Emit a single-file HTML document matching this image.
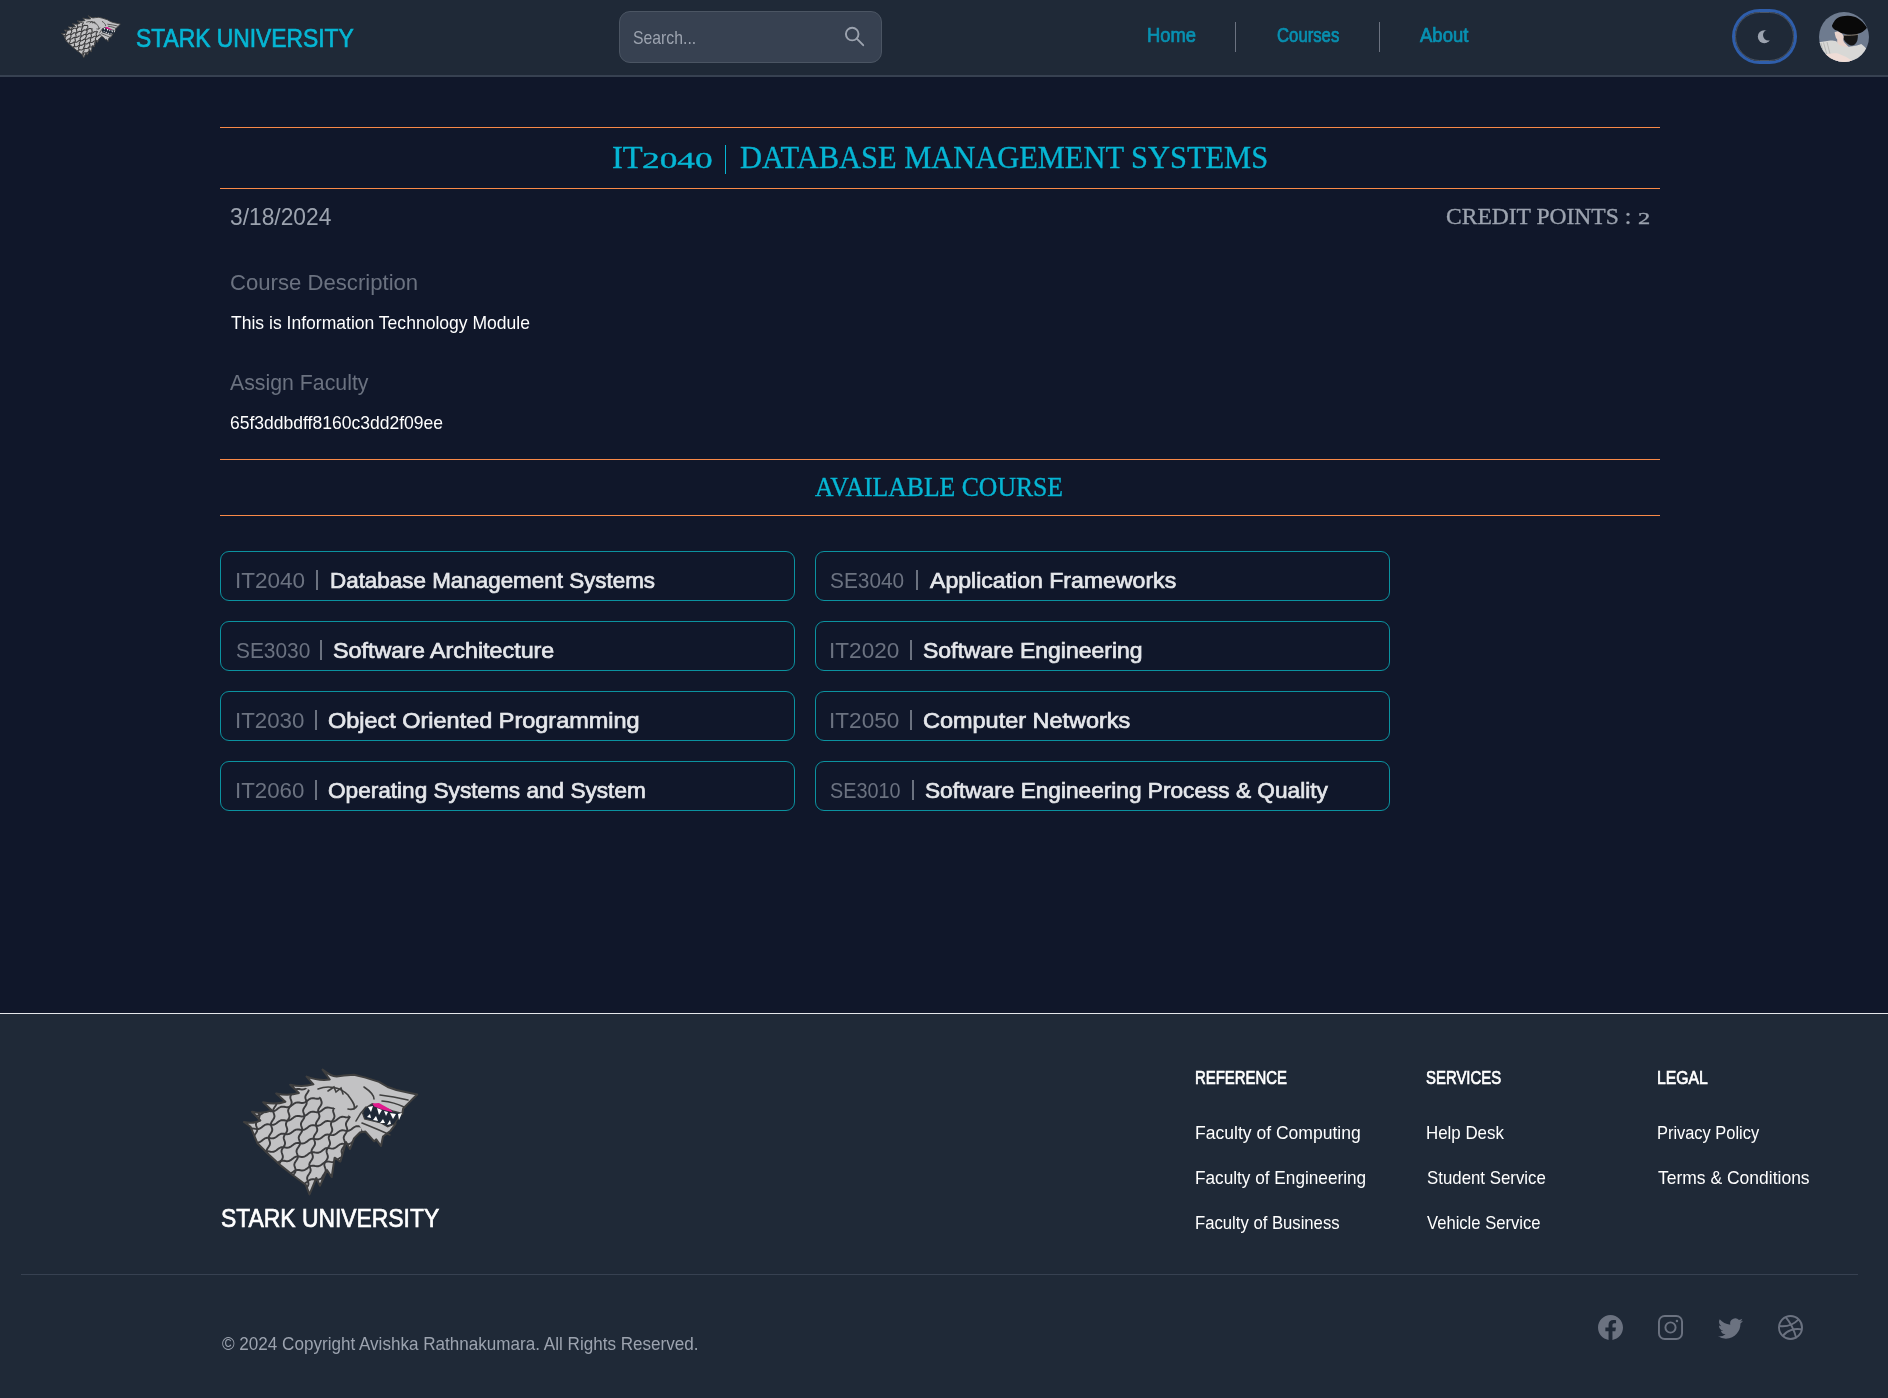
<!DOCTYPE html>
<html><head><meta charset="utf-8">
<style>
html,body{margin:0;padding:0;}
body{width:1888px;height:1398px;overflow:hidden;background:#10172a;position:relative;font-family:"Liberation Sans",sans-serif;}
.t{position:absolute;white-space:nowrap;line-height:1 !important;transform-origin:0 0;}
.abs{position:absolute;}
#nav{position:absolute;left:0;top:0;width:1888px;height:75px;background:#1f2937;border-bottom:2px solid #374151;}
#search{position:absolute;left:619px;top:11px;width:261px;height:50px;background:#374151;border:1px solid #4b5563;border-radius:11px;}
.vd{position:absolute;top:22px;width:1px;height:30px;background:#6b7280;}
#toggle{position:absolute;left:1735px;top:12px;width:57px;height:47px;border:1px solid #4b5563;border-radius:30px;box-shadow:0 0 0 3px #2f5eab;}
.hr{position:absolute;left:220px;width:1440px;height:1px;background:#f98a48;}
.card{position:absolute;width:573px;height:48px;border:1px solid #0b929f;border-radius:9px;}
.pipe{position:absolute;width:1.8px;height:20px;background:#6b7280;}
#footer{position:absolute;left:0;top:1013px;width:1888px;height:385px;background:#1f2937;border-top:1px solid #e5e7eb;}
#fline{position:absolute;left:21px;top:1274px;width:1837px;height:1px;background:#374151;}
</style></head><body>
<div id="nav"></div>
<div id="search"></div>
<svg class="abs" style="left:843px;top:25px" width="24" height="24" viewBox="0 0 24 24"><circle cx="9.2" cy="9.1" r="6.3" fill="none" stroke="#9ca3af" stroke-width="1.9"/><line x1="13.8" y1="13.6" x2="20.2" y2="20.2" stroke="#9ca3af" stroke-width="1.9" stroke-linecap="round"/></svg>
<div class="vd" style="left:1235px"></div>
<div class="vd" style="left:1379px"></div>
<div id="toggle"></div>
<svg class="abs" style="left:1750px;top:25px" width="26" height="24" viewBox="0 0 26 24"><defs><mask id="mm"><rect width="26" height="24" fill="#fff"/><circle cx="18.4" cy="10.05" r="5.42" fill="#000"/></mask></defs><circle cx="14.3" cy="11.7" r="6.5" fill="#9ca3af" mask="url(#mm)"/></svg>
<svg class="abs" style="left:1819px;top:12px" width="50" height="50" viewBox="0 0 50 50">
 <defs><clipPath id="av"><circle cx="25" cy="25" r="25"/></clipPath></defs>
 <g clip-path="url(#av)">
  <rect width="50" height="50" fill="#6e7b8f"/>
  <path d="M15.6 20.3 C17 19.5 18 19.3 19 19.5 C21 20 22 20.8 22.9 21.6 C24 23 24.8 24.5 25 25.9 L24.2 27.6 C24 29 26 32 31 36 L18 36 C18 31 18.3 29 18.2 27.6 C17 26.5 16.5 24.5 16 22.5 Z" fill="#e8d2cb"/>
  <path d="M0 30.2 L11.3 28.5 C14 28.5 16 28.8 17.3 29.3 C18.5 30.5 19 32 19.9 32.8 C23 34 26 34.9 28.5 34.9 C32 34.6 35 34.2 37.9 33.6 C39.5 33 41 32.5 42.2 31.9 C44 33 45.5 34.5 47 36.2 L50 38 L50 50 L0 50 Z" fill="#d8d8d6"/>
  <path d="M2 31 L5 44 M4.5 30.5 L8 43 M8 30 L11 42" stroke="#b4b4b2" stroke-width="0.9"/>
  <path d="M0 43 L7.4 42.2 C12 41.6 16 41.2 19 41.4 C21 42 23 43 25 44 C28 45.5 30.5 47 32.8 48.2 L33 50 L0 50 Z" fill="#efdcd6"/>
  <path d="M13 13.5 C15 9 17 6.5 19 5.7 C22 4.3 26 3.6 29.3 3.8 C33 4 36 4.8 37.9 5.7 C42 8 45.5 11.5 47.8 15.6 L47.8 16 C46 18 44 19.8 41.8 20.8 C40.5 21.4 39 21.8 37.9 22 C35 22.4 32.5 22.6 30.2 22.5 C27.5 22.3 25 21.9 22.9 21.2 C21.5 20.6 20 19.8 19 19 C17.5 18.5 16 18 15.2 17.3 C14 16.4 13.3 15.4 13 14.3 Z" fill="#090909"/>
  <path d="M25 22.9 C29 22.5 34 22.2 38.8 22 C39 24.5 38.8 26.5 38.3 28.5 C37.8 30 37 31 36.2 31.9 C35 32.9 33.5 33.4 31.9 33.6 C30 33 28.5 32 27.2 30.6 C26 29.5 25 28 24.6 26.8 Z" fill="#161616"/>
  <path d="M25 23.3 C30 23.6 35 23.2 39.5 22.3" stroke="#bfae9c" stroke-width="0.6" fill="none"/>
 </g>
</svg>
<div class="hr" style="top:127px"></div>
<div class="hr" style="top:188px"></div>
<div class="hr" style="top:459px"></div>
<div class="hr" style="top:515px"></div>
<div class="card" style="left:220px;top:551px"></div>
<div class="card" style="left:815px;top:551px"></div>
<div class="card" style="left:220px;top:621px"></div>
<div class="card" style="left:815px;top:621px"></div>
<div class="card" style="left:220px;top:691px"></div>
<div class="card" style="left:815px;top:691px"></div>
<div class="card" style="left:220px;top:761px"></div>
<div class="card" style="left:815px;top:761px"></div>
<div class="pipe" style="left:316.4px;top:570px"></div>
<div class="pipe" style="left:916.3px;top:570px"></div>
<div class="pipe" style="left:320.0px;top:640px"></div>
<div class="pipe" style="left:910.0px;top:640px"></div>
<div class="pipe" style="left:315.0px;top:710px"></div>
<div class="pipe" style="left:910.0px;top:710px"></div>
<div class="pipe" style="left:315.0px;top:780px"></div>
<div class="pipe" style="left:911.9px;top:780px"></div>
<div class="abs" style="left:724.6px;top:145px;width:1.8px;height:29px;background:#06b6d4"></div>
<div id="footer"></div>
<div id="fline"></div>
<svg width="0" height="0" style="position:absolute"><defs>
<clipPath id="wsil"><path d="M3.9,57.0 Q13.1,59.2 20.3,55.5 L12.0,46.8 Q22.9,49.1 31.9,45.4 L23.2,37.2 Q35.3,40.0 45.4,36.7 L36.2,28.5 Q48.5,31.2 58.9,28.0 L50.2,19.8 Q62.8,22.6 73.4,19.3 L66.6,11.6 Q79.2,16.1 89.8,14.5 L82.6,4.6 Q90.6,11.1 96.6,11.6 L104.0,10.6 L114.0,9.7 L125.5,12.6 L139.0,16.9 L147.7,22.0 L156.4,25.0 L170.0,28.0 L177.2,29.5 L173.8,32.8 L168.0,38.6 L163.2,43.5 L162.2,49.0 L158.4,50.2 L154.5,54.0 L155.5,59.0 L150.6,65.7 L143.0,71.5 L141.0,81.0 L136.2,74.4 L134.2,76.3 L125.5,66.6 L119.7,67.6 L114.0,73.4 L110.0,84.0 L106.0,77.0 L100.4,96.6 L94.6,92.7 L91.7,112.0 L87.0,105.0 L80.0,120.7 L76.3,113.0 L69.5,129.4 L65.7,119.7 L54.0,111.0 L40.6,100.4 L29.0,89.8 L17.4,78.2 L10.6,61.8 Z"/></clipPath>
<clipPath id="wneck"><polygon points="0.0,0.0 62.0,0.0 64.0,22.0 75.0,28.0 92.0,42.0 106.0,48.0 118.0,58.0 125.0,70.0 130.0,135.0 0.0,135.0"/></clipPath>
<symbol id="wolf" viewBox="0 0 180 135">
<path d="M3.9,57.0 Q13.1,59.2 20.3,55.5 L12.0,46.8 Q22.9,49.1 31.9,45.4 L23.2,37.2 Q35.3,40.0 45.4,36.7 L36.2,28.5 Q48.5,31.2 58.9,28.0 L50.2,19.8 Q62.8,22.6 73.4,19.3 L66.6,11.6 Q79.2,16.1 89.8,14.5 L82.6,4.6 Q90.6,11.1 96.6,11.6 L104.0,10.6 L114.0,9.7 L125.5,12.6 L139.0,16.9 L147.7,22.0 L156.4,25.0 L170.0,28.0 L177.2,29.5 L173.8,32.8 L168.0,38.6 L163.2,43.5 L162.2,49.0 L158.4,50.2 L154.5,54.0 L155.5,59.0 L150.6,65.7 L143.0,71.5 L141.0,81.0 L136.2,74.4 L134.2,76.3 L125.5,66.6 L119.7,67.6 L114.0,73.4 L110.0,84.0 L106.0,77.0 L100.4,96.6 L94.6,92.7 L91.7,112.0 L87.0,105.0 L80.0,120.7 L76.3,113.0 L69.5,129.4 L65.7,119.7 L54.0,111.0 L40.6,100.4 L29.0,89.8 L17.4,78.2 L10.6,61.8 Z" fill="#c2c2c4" stroke="#3f3f3f" style="stroke-width:var(--ow,2)" stroke-linejoin="round"/>
<g clip-path="url(#wsil)"><g clip-path="url(#wneck)" fill="none" stroke="#3c3c3e" style="stroke-width:var(--sw,1.9)" stroke-linejoin="round"><path d="M-32.7,-10.0 L-33.1,-8.5 L-32.9,-7.0 L-32.4,-5.5 L-31.9,-4.0 L-31.7,-2.5 L-32.1,-1.0 L-33.0,0.5 L-34.0,2.0 L-34.9,3.5 L-35.3,5.0 L-35.1,6.5 L-34.6,8.0 L-34.1,9.5 L-33.9,11.0 L-34.3,12.5 L-35.2,14.0 L-36.2,15.5 L-37.1,17.0 L-37.5,18.5 L-37.3,20.0 L-36.8,21.5 L-36.3,23.0 L-36.1,24.5 L-36.5,26.0 L-37.4,27.5 L-38.4,29.0 L-39.3,30.5 L-39.7,32.0 L-39.5,33.5 L-39.0,35.0 L-38.5,36.5 L-38.3,38.0 L-38.7,39.5 L-39.6,41.0 L-40.6,42.5 L-41.5,44.0 L-41.9,45.5 L-41.7,47.0 L-41.2,48.5 L-40.7,50.0 L-40.5,51.5 L-40.9,53.0 L-41.8,54.5 L-42.8,56.0 L-43.7,57.5 L-44.1,59.0 L-43.9,60.5 L-43.4,62.0 L-42.9,63.5 L-42.7,65.0 L-43.1,66.5 L-44.0,68.0 L-45.0,69.5 L-45.9,71.0 L-46.3,72.5 L-46.1,74.0 L-45.6,75.5 L-45.1,77.0 L-44.9,78.5 L-45.3,80.0 L-46.2,81.5 L-47.2,83.0 L-48.1,84.5 L-48.5,86.0 L-48.3,87.5 L-47.8,89.0 L-47.3,90.5 L-47.1,92.0 L-47.5,93.5 L-48.4,95.0 L-49.4,96.5 L-50.3,98.0 L-50.7,99.5 L-50.5,101.0 L-50.0,102.5 L-49.5,104.0 L-49.3,105.5 L-49.7,107.0 L-50.6,108.5 L-51.6,110.0 L-52.5,111.5 L-52.9,113.0 L-52.7,114.5 L-52.2,116.0 L-51.7,117.5 L-51.5,119.0 L-51.9,120.5 L-52.8,122.0 L-53.8,123.5 L-54.7,125.0 L-55.1,126.5 L-54.9,128.0 L-54.4,129.5 L-53.9,131.0 L-53.7,132.5 L-54.1,134.0 L-55.0,135.5 L-56.0,137.0 L-56.9,138.5 L-57.3,140.0"/><path d="M-17.7,-10.0 L-18.1,-8.5 L-17.9,-7.0 L-17.4,-5.5 L-16.9,-4.0 L-16.7,-2.5 L-17.1,-1.0 L-18.0,0.5 L-19.0,2.0 L-19.9,3.5 L-20.3,5.0 L-20.1,6.5 L-19.6,8.0 L-19.1,9.5 L-18.9,11.0 L-19.3,12.5 L-20.2,14.0 L-21.2,15.5 L-22.1,17.0 L-22.5,18.5 L-22.3,20.0 L-21.8,21.5 L-21.3,23.0 L-21.1,24.5 L-21.5,26.0 L-22.4,27.5 L-23.4,29.0 L-24.3,30.5 L-24.7,32.0 L-24.5,33.5 L-24.0,35.0 L-23.5,36.5 L-23.3,38.0 L-23.7,39.5 L-24.6,41.0 L-25.6,42.5 L-26.5,44.0 L-26.9,45.5 L-26.7,47.0 L-26.2,48.5 L-25.7,50.0 L-25.5,51.5 L-25.9,53.0 L-26.8,54.5 L-27.8,56.0 L-28.7,57.5 L-29.1,59.0 L-28.9,60.5 L-28.4,62.0 L-27.9,63.5 L-27.7,65.0 L-28.1,66.5 L-29.0,68.0 L-30.0,69.5 L-30.9,71.0 L-31.3,72.5 L-31.1,74.0 L-30.6,75.5 L-30.1,77.0 L-29.9,78.5 L-30.3,80.0 L-31.2,81.5 L-32.2,83.0 L-33.1,84.5 L-33.5,86.0 L-33.3,87.5 L-32.8,89.0 L-32.3,90.5 L-32.1,92.0 L-32.5,93.5 L-33.4,95.0 L-34.4,96.5 L-35.3,98.0 L-35.7,99.5 L-35.5,101.0 L-35.0,102.5 L-34.5,104.0 L-34.3,105.5 L-34.7,107.0 L-35.6,108.5 L-36.6,110.0 L-37.5,111.5 L-37.9,113.0 L-37.7,114.5 L-37.2,116.0 L-36.7,117.5 L-36.5,119.0 L-36.9,120.5 L-37.8,122.0 L-38.8,123.5 L-39.7,125.0 L-40.1,126.5 L-39.9,128.0 L-39.4,129.5 L-38.9,131.0 L-38.7,132.5 L-39.1,134.0 L-40.0,135.5 L-41.0,137.0 L-41.9,138.5 L-42.3,140.0"/><path d="M-2.7,-10.0 L-3.1,-8.5 L-2.9,-7.0 L-2.4,-5.5 L-1.9,-4.0 L-1.7,-2.5 L-2.1,-1.0 L-3.0,0.5 L-4.0,2.0 L-4.9,3.5 L-5.3,5.0 L-5.1,6.5 L-4.6,8.0 L-4.1,9.5 L-3.9,11.0 L-4.3,12.5 L-5.2,14.0 L-6.2,15.5 L-7.1,17.0 L-7.5,18.5 L-7.3,20.0 L-6.8,21.5 L-6.3,23.0 L-6.1,24.5 L-6.5,26.0 L-7.4,27.5 L-8.4,29.0 L-9.3,30.5 L-9.7,32.0 L-9.5,33.5 L-9.0,35.0 L-8.5,36.5 L-8.3,38.0 L-8.7,39.5 L-9.6,41.0 L-10.6,42.5 L-11.5,44.0 L-11.9,45.5 L-11.7,47.0 L-11.2,48.5 L-10.7,50.0 L-10.5,51.5 L-10.9,53.0 L-11.8,54.5 L-12.8,56.0 L-13.7,57.5 L-14.1,59.0 L-13.9,60.5 L-13.4,62.0 L-12.9,63.5 L-12.7,65.0 L-13.1,66.5 L-14.0,68.0 L-15.0,69.5 L-15.9,71.0 L-16.3,72.5 L-16.1,74.0 L-15.6,75.5 L-15.1,77.0 L-14.9,78.5 L-15.3,80.0 L-16.2,81.5 L-17.2,83.0 L-18.1,84.5 L-18.5,86.0 L-18.3,87.5 L-17.8,89.0 L-17.3,90.5 L-17.1,92.0 L-17.5,93.5 L-18.4,95.0 L-19.4,96.5 L-20.3,98.0 L-20.7,99.5 L-20.5,101.0 L-20.0,102.5 L-19.5,104.0 L-19.3,105.5 L-19.7,107.0 L-20.6,108.5 L-21.6,110.0 L-22.5,111.5 L-22.9,113.0 L-22.7,114.5 L-22.2,116.0 L-21.7,117.5 L-21.5,119.0 L-21.9,120.5 L-22.8,122.0 L-23.8,123.5 L-24.7,125.0 L-25.1,126.5 L-24.9,128.0 L-24.4,129.5 L-23.9,131.0 L-23.7,132.5 L-24.1,134.0 L-25.0,135.5 L-26.0,137.0 L-26.9,138.5 L-27.3,140.0"/><path d="M12.3,-10.0 L11.9,-8.5 L12.1,-7.0 L12.6,-5.5 L13.1,-4.0 L13.3,-2.5 L12.9,-1.0 L12.0,0.5 L11.0,2.0 L10.1,3.5 L9.7,5.0 L9.9,6.5 L10.4,8.0 L10.9,9.5 L11.1,11.0 L10.7,12.5 L9.8,14.0 L8.8,15.5 L7.9,17.0 L7.5,18.5 L7.7,20.0 L8.2,21.5 L8.7,23.0 L8.9,24.5 L8.5,26.0 L7.6,27.5 L6.6,29.0 L5.7,30.5 L5.3,32.0 L5.5,33.5 L6.0,35.0 L6.5,36.5 L6.7,38.0 L6.3,39.5 L5.4,41.0 L4.4,42.5 L3.5,44.0 L3.1,45.5 L3.3,47.0 L3.8,48.5 L4.3,50.0 L4.5,51.5 L4.1,53.0 L3.2,54.5 L2.2,56.0 L1.3,57.5 L0.9,59.0 L1.1,60.5 L1.6,62.0 L2.1,63.5 L2.3,65.0 L1.9,66.5 L1.0,68.0 L-0.0,69.5 L-0.9,71.0 L-1.3,72.5 L-1.1,74.0 L-0.6,75.5 L-0.1,77.0 L0.1,78.5 L-0.3,80.0 L-1.2,81.5 L-2.2,83.0 L-3.1,84.5 L-3.5,86.0 L-3.3,87.5 L-2.8,89.0 L-2.3,90.5 L-2.1,92.0 L-2.5,93.5 L-3.4,95.0 L-4.4,96.5 L-5.3,98.0 L-5.7,99.5 L-5.5,101.0 L-5.0,102.5 L-4.5,104.0 L-4.3,105.5 L-4.7,107.0 L-5.6,108.5 L-6.6,110.0 L-7.5,111.5 L-7.9,113.0 L-7.7,114.5 L-7.2,116.0 L-6.7,117.5 L-6.5,119.0 L-6.9,120.5 L-7.8,122.0 L-8.8,123.5 L-9.7,125.0 L-10.1,126.5 L-9.9,128.0 L-9.4,129.5 L-8.9,131.0 L-8.7,132.5 L-9.1,134.0 L-10.0,135.5 L-11.0,137.0 L-11.9,138.5 L-12.3,140.0"/><path d="M27.3,-10.0 L26.9,-8.5 L27.1,-7.0 L27.6,-5.5 L28.1,-4.0 L28.3,-2.5 L27.9,-1.0 L27.0,0.5 L26.0,2.0 L25.1,3.5 L24.7,5.0 L24.9,6.5 L25.4,8.0 L25.9,9.5 L26.1,11.0 L25.7,12.5 L24.8,14.0 L23.8,15.5 L22.9,17.0 L22.5,18.5 L22.7,20.0 L23.2,21.5 L23.7,23.0 L23.9,24.5 L23.5,26.0 L22.6,27.5 L21.6,29.0 L20.7,30.5 L20.3,32.0 L20.5,33.5 L21.0,35.0 L21.5,36.5 L21.7,38.0 L21.3,39.5 L20.4,41.0 L19.4,42.5 L18.5,44.0 L18.1,45.5 L18.3,47.0 L18.8,48.5 L19.3,50.0 L19.5,51.5 L19.1,53.0 L18.2,54.5 L17.2,56.0 L16.3,57.5 L15.9,59.0 L16.1,60.5 L16.6,62.0 L17.1,63.5 L17.3,65.0 L16.9,66.5 L16.0,68.0 L15.0,69.5 L14.1,71.0 L13.7,72.5 L13.9,74.0 L14.4,75.5 L14.9,77.0 L15.1,78.5 L14.7,80.0 L13.8,81.5 L12.8,83.0 L11.9,84.5 L11.5,86.0 L11.7,87.5 L12.2,89.0 L12.7,90.5 L12.9,92.0 L12.5,93.5 L11.6,95.0 L10.6,96.5 L9.7,98.0 L9.3,99.5 L9.5,101.0 L10.0,102.5 L10.5,104.0 L10.7,105.5 L10.3,107.0 L9.4,108.5 L8.4,110.0 L7.5,111.5 L7.1,113.0 L7.3,114.5 L7.8,116.0 L8.3,117.5 L8.5,119.0 L8.1,120.5 L7.2,122.0 L6.2,123.5 L5.3,125.0 L4.9,126.5 L5.1,128.0 L5.6,129.5 L6.1,131.0 L6.3,132.5 L5.9,134.0 L5.0,135.5 L4.0,137.0 L3.1,138.5 L2.7,140.0"/><path d="M42.3,-10.0 L41.9,-8.5 L42.1,-7.0 L42.6,-5.5 L43.1,-4.0 L43.3,-2.5 L42.9,-1.0 L42.0,0.5 L41.0,2.0 L40.1,3.5 L39.7,5.0 L39.9,6.5 L40.4,8.0 L40.9,9.5 L41.1,11.0 L40.7,12.5 L39.8,14.0 L38.8,15.5 L37.9,17.0 L37.5,18.5 L37.7,20.0 L38.2,21.5 L38.7,23.0 L38.9,24.5 L38.5,26.0 L37.6,27.5 L36.6,29.0 L35.7,30.5 L35.3,32.0 L35.5,33.5 L36.0,35.0 L36.5,36.5 L36.7,38.0 L36.3,39.5 L35.4,41.0 L34.4,42.5 L33.5,44.0 L33.1,45.5 L33.3,47.0 L33.8,48.5 L34.3,50.0 L34.5,51.5 L34.1,53.0 L33.2,54.5 L32.2,56.0 L31.3,57.5 L30.9,59.0 L31.1,60.5 L31.6,62.0 L32.1,63.5 L32.3,65.0 L31.9,66.5 L31.0,68.0 L30.0,69.5 L29.1,71.0 L28.7,72.5 L28.9,74.0 L29.4,75.5 L29.9,77.0 L30.1,78.5 L29.7,80.0 L28.8,81.5 L27.8,83.0 L26.9,84.5 L26.5,86.0 L26.7,87.5 L27.2,89.0 L27.7,90.5 L27.9,92.0 L27.5,93.5 L26.6,95.0 L25.6,96.5 L24.7,98.0 L24.3,99.5 L24.5,101.0 L25.0,102.5 L25.5,104.0 L25.7,105.5 L25.3,107.0 L24.4,108.5 L23.4,110.0 L22.5,111.5 L22.1,113.0 L22.3,114.5 L22.8,116.0 L23.3,117.5 L23.5,119.0 L23.1,120.5 L22.2,122.0 L21.2,123.5 L20.3,125.0 L19.9,126.5 L20.1,128.0 L20.6,129.5 L21.1,131.0 L21.3,132.5 L20.9,134.0 L20.0,135.5 L19.0,137.0 L18.1,138.5 L17.7,140.0"/><path d="M57.3,-10.0 L56.9,-8.5 L57.1,-7.0 L57.6,-5.5 L58.1,-4.0 L58.3,-2.5 L57.9,-1.0 L57.0,0.5 L56.0,2.0 L55.1,3.5 L54.7,5.0 L54.9,6.5 L55.4,8.0 L55.9,9.5 L56.1,11.0 L55.7,12.5 L54.8,14.0 L53.8,15.5 L52.9,17.0 L52.5,18.5 L52.7,20.0 L53.2,21.5 L53.7,23.0 L53.9,24.5 L53.5,26.0 L52.6,27.5 L51.6,29.0 L50.7,30.5 L50.3,32.0 L50.5,33.5 L51.0,35.0 L51.5,36.5 L51.7,38.0 L51.3,39.5 L50.4,41.0 L49.4,42.5 L48.5,44.0 L48.1,45.5 L48.3,47.0 L48.8,48.5 L49.3,50.0 L49.5,51.5 L49.1,53.0 L48.2,54.5 L47.2,56.0 L46.3,57.5 L45.9,59.0 L46.1,60.5 L46.6,62.0 L47.1,63.5 L47.3,65.0 L46.9,66.5 L46.0,68.0 L45.0,69.5 L44.1,71.0 L43.7,72.5 L43.9,74.0 L44.4,75.5 L44.9,77.0 L45.1,78.5 L44.7,80.0 L43.8,81.5 L42.8,83.0 L41.9,84.5 L41.5,86.0 L41.7,87.5 L42.2,89.0 L42.7,90.5 L42.9,92.0 L42.5,93.5 L41.6,95.0 L40.6,96.5 L39.7,98.0 L39.3,99.5 L39.5,101.0 L40.0,102.5 L40.5,104.0 L40.7,105.5 L40.3,107.0 L39.4,108.5 L38.4,110.0 L37.5,111.5 L37.1,113.0 L37.3,114.5 L37.8,116.0 L38.3,117.5 L38.5,119.0 L38.1,120.5 L37.2,122.0 L36.2,123.5 L35.3,125.0 L34.9,126.5 L35.1,128.0 L35.6,129.5 L36.1,131.0 L36.3,132.5 L35.9,134.0 L35.0,135.5 L34.0,137.0 L33.1,138.5 L32.7,140.0"/><path d="M72.3,-10.0 L71.9,-8.5 L72.1,-7.0 L72.6,-5.5 L73.1,-4.0 L73.3,-2.5 L72.9,-1.0 L72.0,0.5 L71.0,2.0 L70.1,3.5 L69.7,5.0 L69.9,6.5 L70.4,8.0 L70.9,9.5 L71.1,11.0 L70.7,12.5 L69.8,14.0 L68.8,15.5 L67.9,17.0 L67.5,18.5 L67.7,20.0 L68.2,21.5 L68.7,23.0 L68.9,24.5 L68.5,26.0 L67.6,27.5 L66.6,29.0 L65.7,30.5 L65.3,32.0 L65.5,33.5 L66.0,35.0 L66.5,36.5 L66.7,38.0 L66.3,39.5 L65.4,41.0 L64.4,42.5 L63.5,44.0 L63.1,45.5 L63.3,47.0 L63.8,48.5 L64.3,50.0 L64.5,51.5 L64.1,53.0 L63.2,54.5 L62.2,56.0 L61.3,57.5 L60.9,59.0 L61.1,60.5 L61.6,62.0 L62.1,63.5 L62.3,65.0 L61.9,66.5 L61.0,68.0 L60.0,69.5 L59.1,71.0 L58.7,72.5 L58.9,74.0 L59.4,75.5 L59.9,77.0 L60.1,78.5 L59.7,80.0 L58.8,81.5 L57.8,83.0 L56.9,84.5 L56.5,86.0 L56.7,87.5 L57.2,89.0 L57.7,90.5 L57.9,92.0 L57.5,93.5 L56.6,95.0 L55.6,96.5 L54.7,98.0 L54.3,99.5 L54.5,101.0 L55.0,102.5 L55.5,104.0 L55.7,105.5 L55.3,107.0 L54.4,108.5 L53.4,110.0 L52.5,111.5 L52.1,113.0 L52.3,114.5 L52.8,116.0 L53.3,117.5 L53.5,119.0 L53.1,120.5 L52.2,122.0 L51.2,123.5 L50.3,125.0 L49.9,126.5 L50.1,128.0 L50.6,129.5 L51.1,131.0 L51.3,132.5 L50.9,134.0 L50.0,135.5 L49.0,137.0 L48.1,138.5 L47.7,140.0"/><path d="M87.3,-10.0 L86.9,-8.5 L87.1,-7.0 L87.6,-5.5 L88.1,-4.0 L88.3,-2.5 L87.9,-1.0 L87.0,0.5 L86.0,2.0 L85.1,3.5 L84.7,5.0 L84.9,6.5 L85.4,8.0 L85.9,9.5 L86.1,11.0 L85.7,12.5 L84.8,14.0 L83.8,15.5 L82.9,17.0 L82.5,18.5 L82.7,20.0 L83.2,21.5 L83.7,23.0 L83.9,24.5 L83.5,26.0 L82.6,27.5 L81.6,29.0 L80.7,30.5 L80.3,32.0 L80.5,33.5 L81.0,35.0 L81.5,36.5 L81.7,38.0 L81.3,39.5 L80.4,41.0 L79.4,42.5 L78.5,44.0 L78.1,45.5 L78.3,47.0 L78.8,48.5 L79.3,50.0 L79.5,51.5 L79.1,53.0 L78.2,54.5 L77.2,56.0 L76.3,57.5 L75.9,59.0 L76.1,60.5 L76.6,62.0 L77.1,63.5 L77.3,65.0 L76.9,66.5 L76.0,68.0 L75.0,69.5 L74.1,71.0 L73.7,72.5 L73.9,74.0 L74.4,75.5 L74.9,77.0 L75.1,78.5 L74.7,80.0 L73.8,81.5 L72.8,83.0 L71.9,84.5 L71.5,86.0 L71.7,87.5 L72.2,89.0 L72.7,90.5 L72.9,92.0 L72.5,93.5 L71.6,95.0 L70.6,96.5 L69.7,98.0 L69.3,99.5 L69.5,101.0 L70.0,102.5 L70.5,104.0 L70.7,105.5 L70.3,107.0 L69.4,108.5 L68.4,110.0 L67.5,111.5 L67.1,113.0 L67.3,114.5 L67.8,116.0 L68.3,117.5 L68.5,119.0 L68.1,120.5 L67.2,122.0 L66.2,123.5 L65.3,125.0 L64.9,126.5 L65.1,128.0 L65.6,129.5 L66.1,131.0 L66.3,132.5 L65.9,134.0 L65.0,135.5 L64.0,137.0 L63.1,138.5 L62.7,140.0"/><path d="M102.3,-10.0 L101.9,-8.5 L102.1,-7.0 L102.6,-5.5 L103.1,-4.0 L103.3,-2.5 L102.9,-1.0 L102.0,0.5 L101.0,2.0 L100.1,3.5 L99.7,5.0 L99.9,6.5 L100.4,8.0 L100.9,9.5 L101.1,11.0 L100.7,12.5 L99.8,14.0 L98.8,15.5 L97.9,17.0 L97.5,18.5 L97.7,20.0 L98.2,21.5 L98.7,23.0 L98.9,24.5 L98.5,26.0 L97.6,27.5 L96.6,29.0 L95.7,30.5 L95.3,32.0 L95.5,33.5 L96.0,35.0 L96.5,36.5 L96.7,38.0 L96.3,39.5 L95.4,41.0 L94.4,42.5 L93.5,44.0 L93.1,45.5 L93.3,47.0 L93.8,48.5 L94.3,50.0 L94.5,51.5 L94.1,53.0 L93.2,54.5 L92.2,56.0 L91.3,57.5 L90.9,59.0 L91.1,60.5 L91.6,62.0 L92.1,63.5 L92.3,65.0 L91.9,66.5 L91.0,68.0 L90.0,69.5 L89.1,71.0 L88.7,72.5 L88.9,74.0 L89.4,75.5 L89.9,77.0 L90.1,78.5 L89.7,80.0 L88.8,81.5 L87.8,83.0 L86.9,84.5 L86.5,86.0 L86.7,87.5 L87.2,89.0 L87.7,90.5 L87.9,92.0 L87.5,93.5 L86.6,95.0 L85.6,96.5 L84.7,98.0 L84.3,99.5 L84.5,101.0 L85.0,102.5 L85.5,104.0 L85.7,105.5 L85.3,107.0 L84.4,108.5 L83.4,110.0 L82.5,111.5 L82.1,113.0 L82.3,114.5 L82.8,116.0 L83.3,117.5 L83.5,119.0 L83.1,120.5 L82.2,122.0 L81.2,123.5 L80.3,125.0 L79.9,126.5 L80.1,128.0 L80.6,129.5 L81.1,131.0 L81.3,132.5 L80.9,134.0 L80.0,135.5 L79.0,137.0 L78.1,138.5 L77.7,140.0"/><path d="M117.3,-10.0 L116.9,-8.5 L117.1,-7.0 L117.6,-5.5 L118.1,-4.0 L118.3,-2.5 L117.9,-1.0 L117.0,0.5 L116.0,2.0 L115.1,3.5 L114.7,5.0 L114.9,6.5 L115.4,8.0 L115.9,9.5 L116.1,11.0 L115.7,12.5 L114.8,14.0 L113.8,15.5 L112.9,17.0 L112.5,18.5 L112.7,20.0 L113.2,21.5 L113.7,23.0 L113.9,24.5 L113.5,26.0 L112.6,27.5 L111.6,29.0 L110.7,30.5 L110.3,32.0 L110.5,33.5 L111.0,35.0 L111.5,36.5 L111.7,38.0 L111.3,39.5 L110.4,41.0 L109.4,42.5 L108.5,44.0 L108.1,45.5 L108.3,47.0 L108.8,48.5 L109.3,50.0 L109.5,51.5 L109.1,53.0 L108.2,54.5 L107.2,56.0 L106.3,57.5 L105.9,59.0 L106.1,60.5 L106.6,62.0 L107.1,63.5 L107.3,65.0 L106.9,66.5 L106.0,68.0 L105.0,69.5 L104.1,71.0 L103.7,72.5 L103.9,74.0 L104.4,75.5 L104.9,77.0 L105.1,78.5 L104.7,80.0 L103.8,81.5 L102.8,83.0 L101.9,84.5 L101.5,86.0 L101.7,87.5 L102.2,89.0 L102.7,90.5 L102.9,92.0 L102.5,93.5 L101.6,95.0 L100.6,96.5 L99.7,98.0 L99.3,99.5 L99.5,101.0 L100.0,102.5 L100.5,104.0 L100.7,105.5 L100.3,107.0 L99.4,108.5 L98.4,110.0 L97.5,111.5 L97.1,113.0 L97.3,114.5 L97.8,116.0 L98.3,117.5 L98.5,119.0 L98.1,120.5 L97.2,122.0 L96.2,123.5 L95.3,125.0 L94.9,126.5 L95.1,128.0 L95.6,129.5 L96.1,131.0 L96.3,132.5 L95.9,134.0 L95.0,135.5 L94.0,137.0 L93.1,138.5 L92.7,140.0"/><path d="M132.3,-10.0 L131.9,-8.5 L132.1,-7.0 L132.6,-5.5 L133.1,-4.0 L133.3,-2.5 L132.9,-1.0 L132.0,0.5 L131.0,2.0 L130.1,3.5 L129.7,5.0 L129.9,6.5 L130.4,8.0 L130.9,9.5 L131.1,11.0 L130.7,12.5 L129.8,14.0 L128.8,15.5 L127.9,17.0 L127.5,18.5 L127.7,20.0 L128.2,21.5 L128.7,23.0 L128.9,24.5 L128.5,26.0 L127.6,27.5 L126.6,29.0 L125.7,30.5 L125.3,32.0 L125.5,33.5 L126.0,35.0 L126.5,36.5 L126.7,38.0 L126.3,39.5 L125.4,41.0 L124.4,42.5 L123.5,44.0 L123.1,45.5 L123.3,47.0 L123.8,48.5 L124.3,50.0 L124.5,51.5 L124.1,53.0 L123.2,54.5 L122.2,56.0 L121.3,57.5 L120.9,59.0 L121.1,60.5 L121.6,62.0 L122.1,63.5 L122.3,65.0 L121.9,66.5 L121.0,68.0 L120.0,69.5 L119.1,71.0 L118.7,72.5 L118.9,74.0 L119.4,75.5 L119.9,77.0 L120.1,78.5 L119.7,80.0 L118.8,81.5 L117.8,83.0 L116.9,84.5 L116.5,86.0 L116.7,87.5 L117.2,89.0 L117.7,90.5 L117.9,92.0 L117.5,93.5 L116.6,95.0 L115.6,96.5 L114.7,98.0 L114.3,99.5 L114.5,101.0 L115.0,102.5 L115.5,104.0 L115.7,105.5 L115.3,107.0 L114.4,108.5 L113.4,110.0 L112.5,111.5 L112.1,113.0 L112.3,114.5 L112.8,116.0 L113.3,117.5 L113.5,119.0 L113.1,120.5 L112.2,122.0 L111.2,123.5 L110.3,125.0 L109.9,126.5 L110.1,128.0 L110.6,129.5 L111.1,131.0 L111.3,132.5 L110.9,134.0 L110.0,135.5 L109.0,137.0 L108.1,138.5 L107.7,140.0"/><path d="M147.3,-10.0 L146.9,-8.5 L147.1,-7.0 L147.6,-5.5 L148.1,-4.0 L148.3,-2.5 L147.9,-1.0 L147.0,0.5 L146.0,2.0 L145.1,3.5 L144.7,5.0 L144.9,6.5 L145.4,8.0 L145.9,9.5 L146.1,11.0 L145.7,12.5 L144.8,14.0 L143.8,15.5 L142.9,17.0 L142.5,18.5 L142.7,20.0 L143.2,21.5 L143.7,23.0 L143.9,24.5 L143.5,26.0 L142.6,27.5 L141.6,29.0 L140.7,30.5 L140.3,32.0 L140.5,33.5 L141.0,35.0 L141.5,36.5 L141.7,38.0 L141.3,39.5 L140.4,41.0 L139.4,42.5 L138.5,44.0 L138.1,45.5 L138.3,47.0 L138.8,48.5 L139.3,50.0 L139.5,51.5 L139.1,53.0 L138.2,54.5 L137.2,56.0 L136.3,57.5 L135.9,59.0 L136.1,60.5 L136.6,62.0 L137.1,63.5 L137.3,65.0 L136.9,66.5 L136.0,68.0 L135.0,69.5 L134.1,71.0 L133.7,72.5 L133.9,74.0 L134.4,75.5 L134.9,77.0 L135.1,78.5 L134.7,80.0 L133.8,81.5 L132.8,83.0 L131.9,84.5 L131.5,86.0 L131.7,87.5 L132.2,89.0 L132.7,90.5 L132.9,92.0 L132.5,93.5 L131.6,95.0 L130.6,96.5 L129.7,98.0 L129.3,99.5 L129.5,101.0 L130.0,102.5 L130.5,104.0 L130.7,105.5 L130.3,107.0 L129.4,108.5 L128.4,110.0 L127.5,111.5 L127.1,113.0 L127.3,114.5 L127.8,116.0 L128.3,117.5 L128.5,119.0 L128.1,120.5 L127.2,122.0 L126.2,123.5 L125.3,125.0 L124.9,126.5 L125.1,128.0 L125.6,129.5 L126.1,131.0 L126.3,132.5 L125.9,134.0 L125.0,135.5 L124.0,137.0 L123.1,138.5 L122.7,140.0"/><path d="M162.3,-10.0 L161.9,-8.5 L162.1,-7.0 L162.6,-5.5 L163.1,-4.0 L163.3,-2.5 L162.9,-1.0 L162.0,0.5 L161.0,2.0 L160.1,3.5 L159.7,5.0 L159.9,6.5 L160.4,8.0 L160.9,9.5 L161.1,11.0 L160.7,12.5 L159.8,14.0 L158.8,15.5 L157.9,17.0 L157.5,18.5 L157.7,20.0 L158.2,21.5 L158.7,23.0 L158.9,24.5 L158.5,26.0 L157.6,27.5 L156.6,29.0 L155.7,30.5 L155.3,32.0 L155.5,33.5 L156.0,35.0 L156.5,36.5 L156.7,38.0 L156.3,39.5 L155.4,41.0 L154.4,42.5 L153.5,44.0 L153.1,45.5 L153.3,47.0 L153.8,48.5 L154.3,50.0 L154.5,51.5 L154.1,53.0 L153.2,54.5 L152.2,56.0 L151.3,57.5 L150.9,59.0 L151.1,60.5 L151.6,62.0 L152.1,63.5 L152.3,65.0 L151.9,66.5 L151.0,68.0 L150.0,69.5 L149.1,71.0 L148.7,72.5 L148.9,74.0 L149.4,75.5 L149.9,77.0 L150.1,78.5 L149.7,80.0 L148.8,81.5 L147.8,83.0 L146.9,84.5 L146.5,86.0 L146.7,87.5 L147.2,89.0 L147.7,90.5 L147.9,92.0 L147.5,93.5 L146.6,95.0 L145.6,96.5 L144.7,98.0 L144.3,99.5 L144.5,101.0 L145.0,102.5 L145.5,104.0 L145.7,105.5 L145.3,107.0 L144.4,108.5 L143.4,110.0 L142.5,111.5 L142.1,113.0 L142.3,114.5 L142.8,116.0 L143.3,117.5 L143.5,119.0 L143.1,120.5 L142.2,122.0 L141.2,123.5 L140.3,125.0 L139.9,126.5 L140.1,128.0 L140.6,129.5 L141.1,131.0 L141.3,132.5 L140.9,134.0 L140.0,135.5 L139.0,137.0 L138.1,138.5 L137.7,140.0"/><path d="M177.3,-10.0 L176.9,-8.5 L177.1,-7.0 L177.6,-5.5 L178.1,-4.0 L178.3,-2.5 L177.9,-1.0 L177.0,0.5 L176.0,2.0 L175.1,3.5 L174.7,5.0 L174.9,6.5 L175.4,8.0 L175.9,9.5 L176.1,11.0 L175.7,12.5 L174.8,14.0 L173.8,15.5 L172.9,17.0 L172.5,18.5 L172.7,20.0 L173.2,21.5 L173.7,23.0 L173.9,24.5 L173.5,26.0 L172.6,27.5 L171.6,29.0 L170.7,30.5 L170.3,32.0 L170.5,33.5 L171.0,35.0 L171.5,36.5 L171.7,38.0 L171.3,39.5 L170.4,41.0 L169.4,42.5 L168.5,44.0 L168.1,45.5 L168.3,47.0 L168.8,48.5 L169.3,50.0 L169.5,51.5 L169.1,53.0 L168.2,54.5 L167.2,56.0 L166.3,57.5 L165.9,59.0 L166.1,60.5 L166.6,62.0 L167.1,63.5 L167.3,65.0 L166.9,66.5 L166.0,68.0 L165.0,69.5 L164.1,71.0 L163.7,72.5 L163.9,74.0 L164.4,75.5 L164.9,77.0 L165.1,78.5 L164.7,80.0 L163.8,81.5 L162.8,83.0 L161.9,84.5 L161.5,86.0 L161.7,87.5 L162.2,89.0 L162.7,90.5 L162.9,92.0 L162.5,93.5 L161.6,95.0 L160.6,96.5 L159.7,98.0 L159.3,99.5 L159.5,101.0 L160.0,102.5 L160.5,104.0 L160.7,105.5 L160.3,107.0 L159.4,108.5 L158.4,110.0 L157.5,111.5 L157.1,113.0 L157.3,114.5 L157.8,116.0 L158.3,117.5 L158.5,119.0 L158.1,120.5 L157.2,122.0 L156.2,123.5 L155.3,125.0 L154.9,126.5 L155.1,128.0 L155.6,129.5 L156.1,131.0 L156.3,132.5 L155.9,134.0 L155.0,135.5 L154.0,137.0 L153.1,138.5 L152.7,140.0"/><path d="M192.3,-10.0 L191.9,-8.5 L192.1,-7.0 L192.6,-5.5 L193.1,-4.0 L193.3,-2.5 L192.9,-1.0 L192.0,0.5 L191.0,2.0 L190.1,3.5 L189.7,5.0 L189.9,6.5 L190.4,8.0 L190.9,9.5 L191.1,11.0 L190.7,12.5 L189.8,14.0 L188.8,15.5 L187.9,17.0 L187.5,18.5 L187.7,20.0 L188.2,21.5 L188.7,23.0 L188.9,24.5 L188.5,26.0 L187.6,27.5 L186.6,29.0 L185.7,30.5 L185.3,32.0 L185.5,33.5 L186.0,35.0 L186.5,36.5 L186.7,38.0 L186.3,39.5 L185.4,41.0 L184.4,42.5 L183.5,44.0 L183.1,45.5 L183.3,47.0 L183.8,48.5 L184.3,50.0 L184.5,51.5 L184.1,53.0 L183.2,54.5 L182.2,56.0 L181.3,57.5 L180.9,59.0 L181.1,60.5 L181.6,62.0 L182.1,63.5 L182.3,65.0 L181.9,66.5 L181.0,68.0 L180.0,69.5 L179.1,71.0 L178.7,72.5 L178.9,74.0 L179.4,75.5 L179.9,77.0 L180.1,78.5 L179.7,80.0 L178.8,81.5 L177.8,83.0 L176.9,84.5 L176.5,86.0 L176.7,87.5 L177.2,89.0 L177.7,90.5 L177.9,92.0 L177.5,93.5 L176.6,95.0 L175.6,96.5 L174.7,98.0 L174.3,99.5 L174.5,101.0 L175.0,102.5 L175.5,104.0 L175.7,105.5 L175.3,107.0 L174.4,108.5 L173.4,110.0 L172.5,111.5 L172.1,113.0 L172.3,114.5 L172.8,116.0 L173.3,117.5 L173.5,119.0 L173.1,120.5 L172.2,122.0 L171.2,123.5 L170.3,125.0 L169.9,126.5 L170.1,128.0 L170.6,129.5 L171.1,131.0 L171.3,132.5 L170.9,134.0 L170.0,135.5 L169.0,137.0 L168.1,138.5 L167.7,140.0"/><path d="M207.3,-10.0 L206.9,-8.5 L207.1,-7.0 L207.6,-5.5 L208.1,-4.0 L208.3,-2.5 L207.9,-1.0 L207.0,0.5 L206.0,2.0 L205.1,3.5 L204.7,5.0 L204.9,6.5 L205.4,8.0 L205.9,9.5 L206.1,11.0 L205.7,12.5 L204.8,14.0 L203.8,15.5 L202.9,17.0 L202.5,18.5 L202.7,20.0 L203.2,21.5 L203.7,23.0 L203.9,24.5 L203.5,26.0 L202.6,27.5 L201.6,29.0 L200.7,30.5 L200.3,32.0 L200.5,33.5 L201.0,35.0 L201.5,36.5 L201.7,38.0 L201.3,39.5 L200.4,41.0 L199.4,42.5 L198.5,44.0 L198.1,45.5 L198.3,47.0 L198.8,48.5 L199.3,50.0 L199.5,51.5 L199.1,53.0 L198.2,54.5 L197.2,56.0 L196.3,57.5 L195.9,59.0 L196.1,60.5 L196.6,62.0 L197.1,63.5 L197.3,65.0 L196.9,66.5 L196.0,68.0 L195.0,69.5 L194.1,71.0 L193.7,72.5 L193.9,74.0 L194.4,75.5 L194.9,77.0 L195.1,78.5 L194.7,80.0 L193.8,81.5 L192.8,83.0 L191.9,84.5 L191.5,86.0 L191.7,87.5 L192.2,89.0 L192.7,90.5 L192.9,92.0 L192.5,93.5 L191.6,95.0 L190.6,96.5 L189.7,98.0 L189.3,99.5 L189.5,101.0 L190.0,102.5 L190.5,104.0 L190.7,105.5 L190.3,107.0 L189.4,108.5 L188.4,110.0 L187.5,111.5 L187.1,113.0 L187.3,114.5 L187.8,116.0 L188.3,117.5 L188.5,119.0 L188.1,120.5 L187.2,122.0 L186.2,123.5 L185.3,125.0 L184.9,126.5 L185.1,128.0 L185.6,129.5 L186.1,131.0 L186.3,132.5 L185.9,134.0 L185.0,135.5 L184.0,137.0 L183.1,138.5 L182.7,140.0"/><path d="M222.3,-10.0 L221.9,-8.5 L222.1,-7.0 L222.6,-5.5 L223.1,-4.0 L223.3,-2.5 L222.9,-1.0 L222.0,0.5 L221.0,2.0 L220.1,3.5 L219.7,5.0 L219.9,6.5 L220.4,8.0 L220.9,9.5 L221.1,11.0 L220.7,12.5 L219.8,14.0 L218.8,15.5 L217.9,17.0 L217.5,18.5 L217.7,20.0 L218.2,21.5 L218.7,23.0 L218.9,24.5 L218.5,26.0 L217.6,27.5 L216.6,29.0 L215.7,30.5 L215.3,32.0 L215.5,33.5 L216.0,35.0 L216.5,36.5 L216.7,38.0 L216.3,39.5 L215.4,41.0 L214.4,42.5 L213.5,44.0 L213.1,45.5 L213.3,47.0 L213.8,48.5 L214.3,50.0 L214.5,51.5 L214.1,53.0 L213.2,54.5 L212.2,56.0 L211.3,57.5 L210.9,59.0 L211.1,60.5 L211.6,62.0 L212.1,63.5 L212.3,65.0 L211.9,66.5 L211.0,68.0 L210.0,69.5 L209.1,71.0 L208.7,72.5 L208.9,74.0 L209.4,75.5 L209.9,77.0 L210.1,78.5 L209.7,80.0 L208.8,81.5 L207.8,83.0 L206.9,84.5 L206.5,86.0 L206.7,87.5 L207.2,89.0 L207.7,90.5 L207.9,92.0 L207.5,93.5 L206.6,95.0 L205.6,96.5 L204.7,98.0 L204.3,99.5 L204.5,101.0 L205.0,102.5 L205.5,104.0 L205.7,105.5 L205.3,107.0 L204.4,108.5 L203.4,110.0 L202.5,111.5 L202.1,113.0 L202.3,114.5 L202.8,116.0 L203.3,117.5 L203.5,119.0 L203.1,120.5 L202.2,122.0 L201.2,123.5 L200.3,125.0 L199.9,126.5 L200.1,128.0 L200.6,129.5 L201.1,131.0 L201.3,132.5 L200.9,134.0 L200.0,135.5 L199.0,137.0 L198.1,138.5 L197.7,140.0"/><path d="M-10.0,17.8 L-8.5,16.9 L-7.0,15.7 L-5.5,14.6 L-4.0,13.9 L-2.5,13.7 L-1.0,13.8 L0.5,14.1 L2.0,14.3 L3.5,14.2 L5.0,13.6 L6.5,12.7 L8.0,11.5 L9.5,10.4 L11.0,9.7 L12.5,9.5 L14.0,9.6 L15.5,9.9 L17.0,10.1 L18.5,10.0 L20.0,9.4 L21.5,8.5 L23.0,7.3 L24.5,6.2 L26.0,5.5 L27.5,5.3 L29.0,5.4 L30.5,5.7 L32.0,5.9 L33.5,5.8 L35.0,5.2 L36.5,4.3 L38.0,3.1 L39.5,2.0 L41.0,1.3 L42.5,1.1 L44.0,1.2 L45.5,1.5 L47.0,1.7 L48.5,1.6 L50.0,1.0 L51.5,0.1 L53.0,-1.1 L54.5,-2.2 L56.0,-2.9 L57.5,-3.1 L59.0,-3.0 L60.5,-2.7 L62.0,-2.5 L63.5,-2.6 L65.0,-3.2 L66.5,-4.1 L68.0,-5.3 L69.5,-6.4 L71.0,-7.1 L72.5,-7.3 L74.0,-7.2 L75.5,-6.9 L77.0,-6.7 L78.5,-6.8 L80.0,-7.4 L81.5,-8.3 L83.0,-9.5 L84.5,-10.6 L86.0,-11.3 L87.5,-11.5 L89.0,-11.4 L90.5,-11.1 L92.0,-10.9 L93.5,-11.0 L95.0,-11.6 L96.5,-12.5 L98.0,-13.7 L99.5,-14.8 L101.0,-15.5 L102.5,-15.7 L104.0,-15.6 L105.5,-15.3 L107.0,-15.1 L108.5,-15.2 L110.0,-15.8 L111.5,-16.7 L113.0,-17.9 L114.5,-19.0 L116.0,-19.7 L117.5,-19.9 L119.0,-19.8 L120.5,-19.5 L122.0,-19.3 L123.5,-19.4 L125.0,-20.0 L126.5,-20.9 L128.0,-22.1 L129.5,-23.2 L131.0,-23.9 L132.5,-24.1 L134.0,-24.0 L135.5,-23.7 L137.0,-23.5 L138.5,-23.6 L140.0,-24.2 L141.5,-25.1 L143.0,-26.3 L144.5,-27.4 L146.0,-28.1 L147.5,-28.3 L149.0,-28.2 L150.5,-27.9 L152.0,-27.7 L153.5,-27.8 L155.0,-28.4 L156.5,-29.3 L158.0,-30.5 L159.5,-31.6 L161.0,-32.3 L162.5,-32.5 L164.0,-32.4 L165.5,-32.1 L167.0,-31.9 L168.5,-32.0 L170.0,-32.6 L171.5,-33.5 L173.0,-34.7 L174.5,-35.8 L176.0,-36.5 L177.5,-36.7 L179.0,-36.6 L180.5,-36.3 L182.0,-36.1 L183.5,-36.2 L185.0,-36.8 L186.5,-37.7 L188.0,-38.9 L189.5,-40.0"/><path d="M-10.0,31.3 L-8.5,30.4 L-7.0,29.2 L-5.5,28.1 L-4.0,27.4 L-2.5,27.2 L-1.0,27.3 L0.5,27.6 L2.0,27.8 L3.5,27.7 L5.0,27.1 L6.5,26.2 L8.0,25.0 L9.5,23.9 L11.0,23.2 L12.5,23.0 L14.0,23.1 L15.5,23.4 L17.0,23.6 L18.5,23.5 L20.0,22.9 L21.5,22.0 L23.0,20.8 L24.5,19.7 L26.0,19.0 L27.5,18.8 L29.0,18.9 L30.5,19.2 L32.0,19.4 L33.5,19.3 L35.0,18.7 L36.5,17.8 L38.0,16.6 L39.5,15.5 L41.0,14.8 L42.5,14.6 L44.0,14.7 L45.5,15.0 L47.0,15.2 L48.5,15.1 L50.0,14.5 L51.5,13.6 L53.0,12.4 L54.5,11.3 L56.0,10.6 L57.5,10.4 L59.0,10.5 L60.5,10.8 L62.0,11.0 L63.5,10.9 L65.0,10.3 L66.5,9.4 L68.0,8.2 L69.5,7.1 L71.0,6.4 L72.5,6.2 L74.0,6.3 L75.5,6.6 L77.0,6.8 L78.5,6.7 L80.0,6.1 L81.5,5.2 L83.0,4.0 L84.5,2.9 L86.0,2.2 L87.5,2.0 L89.0,2.1 L90.5,2.4 L92.0,2.6 L93.5,2.5 L95.0,1.9 L96.5,1.0 L98.0,-0.2 L99.5,-1.3 L101.0,-2.0 L102.5,-2.2 L104.0,-2.1 L105.5,-1.8 L107.0,-1.6 L108.5,-1.7 L110.0,-2.3 L111.5,-3.2 L113.0,-4.4 L114.5,-5.5 L116.0,-6.2 L117.5,-6.4 L119.0,-6.3 L120.5,-6.0 L122.0,-5.8 L123.5,-5.9 L125.0,-6.5 L126.5,-7.4 L128.0,-8.6 L129.5,-9.7 L131.0,-10.4 L132.5,-10.6 L134.0,-10.5 L135.5,-10.2 L137.0,-10.0 L138.5,-10.1 L140.0,-10.7 L141.5,-11.6 L143.0,-12.8 L144.5,-13.9 L146.0,-14.6 L147.5,-14.8 L149.0,-14.7 L150.5,-14.4 L152.0,-14.2 L153.5,-14.3 L155.0,-14.9 L156.5,-15.8 L158.0,-17.0 L159.5,-18.1 L161.0,-18.8 L162.5,-19.0 L164.0,-18.9 L165.5,-18.6 L167.0,-18.4 L168.5,-18.5 L170.0,-19.1 L171.5,-20.0 L173.0,-21.2 L174.5,-22.3 L176.0,-23.0 L177.5,-23.2 L179.0,-23.1 L180.5,-22.8 L182.0,-22.6 L183.5,-22.7 L185.0,-23.3 L186.5,-24.2 L188.0,-25.4 L189.5,-26.5"/><path d="M-10.0,44.8 L-8.5,43.9 L-7.0,42.7 L-5.5,41.6 L-4.0,40.9 L-2.5,40.7 L-1.0,40.8 L0.5,41.1 L2.0,41.3 L3.5,41.2 L5.0,40.6 L6.5,39.7 L8.0,38.5 L9.5,37.4 L11.0,36.7 L12.5,36.5 L14.0,36.6 L15.5,36.9 L17.0,37.1 L18.5,37.0 L20.0,36.4 L21.5,35.5 L23.0,34.3 L24.5,33.2 L26.0,32.5 L27.5,32.3 L29.0,32.4 L30.5,32.7 L32.0,32.9 L33.5,32.8 L35.0,32.2 L36.5,31.3 L38.0,30.1 L39.5,29.0 L41.0,28.3 L42.5,28.1 L44.0,28.2 L45.5,28.5 L47.0,28.7 L48.5,28.6 L50.0,28.0 L51.5,27.1 L53.0,25.9 L54.5,24.8 L56.0,24.1 L57.5,23.9 L59.0,24.0 L60.5,24.3 L62.0,24.5 L63.5,24.4 L65.0,23.8 L66.5,22.9 L68.0,21.7 L69.5,20.6 L71.0,19.9 L72.5,19.7 L74.0,19.8 L75.5,20.1 L77.0,20.3 L78.5,20.2 L80.0,19.6 L81.5,18.7 L83.0,17.5 L84.5,16.4 L86.0,15.7 L87.5,15.5 L89.0,15.6 L90.5,15.9 L92.0,16.1 L93.5,16.0 L95.0,15.4 L96.5,14.5 L98.0,13.3 L99.5,12.2 L101.0,11.5 L102.5,11.3 L104.0,11.4 L105.5,11.7 L107.0,11.9 L108.5,11.8 L110.0,11.2 L111.5,10.3 L113.0,9.1 L114.5,8.0 L116.0,7.3 L117.5,7.1 L119.0,7.2 L120.5,7.5 L122.0,7.7 L123.5,7.6 L125.0,7.0 L126.5,6.1 L128.0,4.9 L129.5,3.8 L131.0,3.1 L132.5,2.9 L134.0,3.0 L135.5,3.3 L137.0,3.5 L138.5,3.4 L140.0,2.8 L141.5,1.9 L143.0,0.7 L144.5,-0.4 L146.0,-1.1 L147.5,-1.3 L149.0,-1.2 L150.5,-0.9 L152.0,-0.7 L153.5,-0.8 L155.0,-1.4 L156.5,-2.3 L158.0,-3.5 L159.5,-4.6 L161.0,-5.3 L162.5,-5.5 L164.0,-5.4 L165.5,-5.1 L167.0,-4.9 L168.5,-5.0 L170.0,-5.6 L171.5,-6.5 L173.0,-7.7 L174.5,-8.8 L176.0,-9.5 L177.5,-9.7 L179.0,-9.6 L180.5,-9.3 L182.0,-9.1 L183.5,-9.2 L185.0,-9.8 L186.5,-10.7 L188.0,-11.9 L189.5,-13.0"/><path d="M-10.0,58.3 L-8.5,57.4 L-7.0,56.2 L-5.5,55.1 L-4.0,54.4 L-2.5,54.2 L-1.0,54.3 L0.5,54.6 L2.0,54.8 L3.5,54.7 L5.0,54.1 L6.5,53.2 L8.0,52.0 L9.5,50.9 L11.0,50.2 L12.5,50.0 L14.0,50.1 L15.5,50.4 L17.0,50.6 L18.5,50.5 L20.0,49.9 L21.5,49.0 L23.0,47.8 L24.5,46.7 L26.0,46.0 L27.5,45.8 L29.0,45.9 L30.5,46.2 L32.0,46.4 L33.5,46.3 L35.0,45.7 L36.5,44.8 L38.0,43.6 L39.5,42.5 L41.0,41.8 L42.5,41.6 L44.0,41.7 L45.5,42.0 L47.0,42.2 L48.5,42.1 L50.0,41.5 L51.5,40.6 L53.0,39.4 L54.5,38.3 L56.0,37.6 L57.5,37.4 L59.0,37.5 L60.5,37.8 L62.0,38.0 L63.5,37.9 L65.0,37.3 L66.5,36.4 L68.0,35.2 L69.5,34.1 L71.0,33.4 L72.5,33.2 L74.0,33.3 L75.5,33.6 L77.0,33.8 L78.5,33.7 L80.0,33.1 L81.5,32.2 L83.0,31.0 L84.5,29.9 L86.0,29.2 L87.5,29.0 L89.0,29.1 L90.5,29.4 L92.0,29.6 L93.5,29.5 L95.0,28.9 L96.5,28.0 L98.0,26.8 L99.5,25.7 L101.0,25.0 L102.5,24.8 L104.0,24.9 L105.5,25.2 L107.0,25.4 L108.5,25.3 L110.0,24.7 L111.5,23.8 L113.0,22.6 L114.5,21.5 L116.0,20.8 L117.5,20.6 L119.0,20.7 L120.5,21.0 L122.0,21.2 L123.5,21.1 L125.0,20.5 L126.5,19.6 L128.0,18.4 L129.5,17.3 L131.0,16.6 L132.5,16.4 L134.0,16.5 L135.5,16.8 L137.0,17.0 L138.5,16.9 L140.0,16.3 L141.5,15.4 L143.0,14.2 L144.5,13.1 L146.0,12.4 L147.5,12.2 L149.0,12.3 L150.5,12.6 L152.0,12.8 L153.5,12.7 L155.0,12.1 L156.5,11.2 L158.0,10.0 L159.5,8.9 L161.0,8.2 L162.5,8.0 L164.0,8.1 L165.5,8.4 L167.0,8.6 L168.5,8.5 L170.0,7.9 L171.5,7.0 L173.0,5.8 L174.5,4.7 L176.0,4.0 L177.5,3.8 L179.0,3.9 L180.5,4.2 L182.0,4.4 L183.5,4.3 L185.0,3.7 L186.5,2.8 L188.0,1.6 L189.5,0.5"/><path d="M-10.0,71.8 L-8.5,70.9 L-7.0,69.7 L-5.5,68.6 L-4.0,67.9 L-2.5,67.7 L-1.0,67.8 L0.5,68.1 L2.0,68.3 L3.5,68.2 L5.0,67.6 L6.5,66.7 L8.0,65.5 L9.5,64.4 L11.0,63.7 L12.5,63.5 L14.0,63.6 L15.5,63.9 L17.0,64.1 L18.5,64.0 L20.0,63.4 L21.5,62.5 L23.0,61.3 L24.5,60.2 L26.0,59.5 L27.5,59.3 L29.0,59.4 L30.5,59.7 L32.0,59.9 L33.5,59.8 L35.0,59.2 L36.5,58.3 L38.0,57.1 L39.5,56.0 L41.0,55.3 L42.5,55.1 L44.0,55.2 L45.5,55.5 L47.0,55.7 L48.5,55.6 L50.0,55.0 L51.5,54.1 L53.0,52.9 L54.5,51.8 L56.0,51.1 L57.5,50.9 L59.0,51.0 L60.5,51.3 L62.0,51.5 L63.5,51.4 L65.0,50.8 L66.5,49.9 L68.0,48.7 L69.5,47.6 L71.0,46.9 L72.5,46.7 L74.0,46.8 L75.5,47.1 L77.0,47.3 L78.5,47.2 L80.0,46.6 L81.5,45.7 L83.0,44.5 L84.5,43.4 L86.0,42.7 L87.5,42.5 L89.0,42.6 L90.5,42.9 L92.0,43.1 L93.5,43.0 L95.0,42.4 L96.5,41.5 L98.0,40.3 L99.5,39.2 L101.0,38.5 L102.5,38.3 L104.0,38.4 L105.5,38.7 L107.0,38.9 L108.5,38.8 L110.0,38.2 L111.5,37.3 L113.0,36.1 L114.5,35.0 L116.0,34.3 L117.5,34.1 L119.0,34.2 L120.5,34.5 L122.0,34.7 L123.5,34.6 L125.0,34.0 L126.5,33.1 L128.0,31.9 L129.5,30.8 L131.0,30.1 L132.5,29.9 L134.0,30.0 L135.5,30.3 L137.0,30.5 L138.5,30.4 L140.0,29.8 L141.5,28.9 L143.0,27.7 L144.5,26.6 L146.0,25.9 L147.5,25.7 L149.0,25.8 L150.5,26.1 L152.0,26.3 L153.5,26.2 L155.0,25.6 L156.5,24.7 L158.0,23.5 L159.5,22.4 L161.0,21.7 L162.5,21.5 L164.0,21.6 L165.5,21.9 L167.0,22.1 L168.5,22.0 L170.0,21.4 L171.5,20.5 L173.0,19.3 L174.5,18.2 L176.0,17.5 L177.5,17.3 L179.0,17.4 L180.5,17.7 L182.0,17.9 L183.5,17.8 L185.0,17.2 L186.5,16.3 L188.0,15.1 L189.5,14.0"/><path d="M-10.0,85.3 L-8.5,84.4 L-7.0,83.2 L-5.5,82.1 L-4.0,81.4 L-2.5,81.2 L-1.0,81.3 L0.5,81.6 L2.0,81.8 L3.5,81.7 L5.0,81.1 L6.5,80.2 L8.0,79.0 L9.5,77.9 L11.0,77.2 L12.5,77.0 L14.0,77.1 L15.5,77.4 L17.0,77.6 L18.5,77.5 L20.0,76.9 L21.5,76.0 L23.0,74.8 L24.5,73.7 L26.0,73.0 L27.5,72.8 L29.0,72.9 L30.5,73.2 L32.0,73.4 L33.5,73.3 L35.0,72.7 L36.5,71.8 L38.0,70.6 L39.5,69.5 L41.0,68.8 L42.5,68.6 L44.0,68.7 L45.5,69.0 L47.0,69.2 L48.5,69.1 L50.0,68.5 L51.5,67.6 L53.0,66.4 L54.5,65.3 L56.0,64.6 L57.5,64.4 L59.0,64.5 L60.5,64.8 L62.0,65.0 L63.5,64.9 L65.0,64.3 L66.5,63.4 L68.0,62.2 L69.5,61.1 L71.0,60.4 L72.5,60.2 L74.0,60.3 L75.5,60.6 L77.0,60.8 L78.5,60.7 L80.0,60.1 L81.5,59.2 L83.0,58.0 L84.5,56.9 L86.0,56.2 L87.5,56.0 L89.0,56.1 L90.5,56.4 L92.0,56.6 L93.5,56.5 L95.0,55.9 L96.5,55.0 L98.0,53.8 L99.5,52.7 L101.0,52.0 L102.5,51.8 L104.0,51.9 L105.5,52.2 L107.0,52.4 L108.5,52.3 L110.0,51.7 L111.5,50.8 L113.0,49.6 L114.5,48.5 L116.0,47.8 L117.5,47.6 L119.0,47.7 L120.5,48.0 L122.0,48.2 L123.5,48.1 L125.0,47.5 L126.5,46.6 L128.0,45.4 L129.5,44.3 L131.0,43.6 L132.5,43.4 L134.0,43.5 L135.5,43.8 L137.0,44.0 L138.5,43.9 L140.0,43.3 L141.5,42.4 L143.0,41.2 L144.5,40.1 L146.0,39.4 L147.5,39.2 L149.0,39.3 L150.5,39.6 L152.0,39.8 L153.5,39.7 L155.0,39.1 L156.5,38.2 L158.0,37.0 L159.5,35.9 L161.0,35.2 L162.5,35.0 L164.0,35.1 L165.5,35.4 L167.0,35.6 L168.5,35.5 L170.0,34.9 L171.5,34.0 L173.0,32.8 L174.5,31.7 L176.0,31.0 L177.5,30.8 L179.0,30.9 L180.5,31.2 L182.0,31.4 L183.5,31.3 L185.0,30.7 L186.5,29.8 L188.0,28.6 L189.5,27.5"/><path d="M-10.0,98.8 L-8.5,97.9 L-7.0,96.7 L-5.5,95.6 L-4.0,94.9 L-2.5,94.7 L-1.0,94.8 L0.5,95.1 L2.0,95.3 L3.5,95.2 L5.0,94.6 L6.5,93.7 L8.0,92.5 L9.5,91.4 L11.0,90.7 L12.5,90.5 L14.0,90.6 L15.5,90.9 L17.0,91.1 L18.5,91.0 L20.0,90.4 L21.5,89.5 L23.0,88.3 L24.5,87.2 L26.0,86.5 L27.5,86.3 L29.0,86.4 L30.5,86.7 L32.0,86.9 L33.5,86.8 L35.0,86.2 L36.5,85.3 L38.0,84.1 L39.5,83.0 L41.0,82.3 L42.5,82.1 L44.0,82.2 L45.5,82.5 L47.0,82.7 L48.5,82.6 L50.0,82.0 L51.5,81.1 L53.0,79.9 L54.5,78.8 L56.0,78.1 L57.5,77.9 L59.0,78.0 L60.5,78.3 L62.0,78.5 L63.5,78.4 L65.0,77.8 L66.5,76.9 L68.0,75.7 L69.5,74.6 L71.0,73.9 L72.5,73.7 L74.0,73.8 L75.5,74.1 L77.0,74.3 L78.5,74.2 L80.0,73.6 L81.5,72.7 L83.0,71.5 L84.5,70.4 L86.0,69.7 L87.5,69.5 L89.0,69.6 L90.5,69.9 L92.0,70.1 L93.5,70.0 L95.0,69.4 L96.5,68.5 L98.0,67.3 L99.5,66.2 L101.0,65.5 L102.5,65.3 L104.0,65.4 L105.5,65.7 L107.0,65.9 L108.5,65.8 L110.0,65.2 L111.5,64.3 L113.0,63.1 L114.5,62.0 L116.0,61.3 L117.5,61.1 L119.0,61.2 L120.5,61.5 L122.0,61.7 L123.5,61.6 L125.0,61.0 L126.5,60.1 L128.0,58.9 L129.5,57.8 L131.0,57.1 L132.5,56.9 L134.0,57.0 L135.5,57.3 L137.0,57.5 L138.5,57.4 L140.0,56.8 L141.5,55.9 L143.0,54.7 L144.5,53.6 L146.0,52.9 L147.5,52.7 L149.0,52.8 L150.5,53.1 L152.0,53.3 L153.5,53.2 L155.0,52.6 L156.5,51.7 L158.0,50.5 L159.5,49.4 L161.0,48.7 L162.5,48.5 L164.0,48.6 L165.5,48.9 L167.0,49.1 L168.5,49.0 L170.0,48.4 L171.5,47.5 L173.0,46.3 L174.5,45.2 L176.0,44.5 L177.5,44.3 L179.0,44.4 L180.5,44.7 L182.0,44.9 L183.5,44.8 L185.0,44.2 L186.5,43.3 L188.0,42.1 L189.5,41.0"/><path d="M-10.0,112.3 L-8.5,111.4 L-7.0,110.2 L-5.5,109.1 L-4.0,108.4 L-2.5,108.2 L-1.0,108.3 L0.5,108.6 L2.0,108.8 L3.5,108.7 L5.0,108.1 L6.5,107.2 L8.0,106.0 L9.5,104.9 L11.0,104.2 L12.5,104.0 L14.0,104.1 L15.5,104.4 L17.0,104.6 L18.5,104.5 L20.0,103.9 L21.5,103.0 L23.0,101.8 L24.5,100.7 L26.0,100.0 L27.5,99.8 L29.0,99.9 L30.5,100.2 L32.0,100.4 L33.5,100.3 L35.0,99.7 L36.5,98.8 L38.0,97.6 L39.5,96.5 L41.0,95.8 L42.5,95.6 L44.0,95.7 L45.5,96.0 L47.0,96.2 L48.5,96.1 L50.0,95.5 L51.5,94.6 L53.0,93.4 L54.5,92.3 L56.0,91.6 L57.5,91.4 L59.0,91.5 L60.5,91.8 L62.0,92.0 L63.5,91.9 L65.0,91.3 L66.5,90.4 L68.0,89.2 L69.5,88.1 L71.0,87.4 L72.5,87.2 L74.0,87.3 L75.5,87.6 L77.0,87.8 L78.5,87.7 L80.0,87.1 L81.5,86.2 L83.0,85.0 L84.5,83.9 L86.0,83.2 L87.5,83.0 L89.0,83.1 L90.5,83.4 L92.0,83.6 L93.5,83.5 L95.0,82.9 L96.5,82.0 L98.0,80.8 L99.5,79.7 L101.0,79.0 L102.5,78.8 L104.0,78.9 L105.5,79.2 L107.0,79.4 L108.5,79.3 L110.0,78.7 L111.5,77.8 L113.0,76.6 L114.5,75.5 L116.0,74.8 L117.5,74.6 L119.0,74.7 L120.5,75.0 L122.0,75.2 L123.5,75.1 L125.0,74.5 L126.5,73.6 L128.0,72.4 L129.5,71.3 L131.0,70.6 L132.5,70.4 L134.0,70.5 L135.5,70.8 L137.0,71.0 L138.5,70.9 L140.0,70.3 L141.5,69.4 L143.0,68.2 L144.5,67.1 L146.0,66.4 L147.5,66.2 L149.0,66.3 L150.5,66.6 L152.0,66.8 L153.5,66.7 L155.0,66.1 L156.5,65.2 L158.0,64.0 L159.5,62.9 L161.0,62.2 L162.5,62.0 L164.0,62.1 L165.5,62.4 L167.0,62.6 L168.5,62.5 L170.0,61.9 L171.5,61.0 L173.0,59.8 L174.5,58.7 L176.0,58.0 L177.5,57.8 L179.0,57.9 L180.5,58.2 L182.0,58.4 L183.5,58.3 L185.0,57.7 L186.5,56.8 L188.0,55.6 L189.5,54.5"/><path d="M-10.0,125.8 L-8.5,124.9 L-7.0,123.7 L-5.5,122.6 L-4.0,121.9 L-2.5,121.7 L-1.0,121.8 L0.5,122.1 L2.0,122.3 L3.5,122.2 L5.0,121.6 L6.5,120.7 L8.0,119.5 L9.5,118.4 L11.0,117.7 L12.5,117.5 L14.0,117.6 L15.5,117.9 L17.0,118.1 L18.5,118.0 L20.0,117.4 L21.5,116.5 L23.0,115.3 L24.5,114.2 L26.0,113.5 L27.5,113.3 L29.0,113.4 L30.5,113.7 L32.0,113.9 L33.5,113.8 L35.0,113.2 L36.5,112.3 L38.0,111.1 L39.5,110.0 L41.0,109.3 L42.5,109.1 L44.0,109.2 L45.5,109.5 L47.0,109.7 L48.5,109.6 L50.0,109.0 L51.5,108.1 L53.0,106.9 L54.5,105.8 L56.0,105.1 L57.5,104.9 L59.0,105.0 L60.5,105.3 L62.0,105.5 L63.5,105.4 L65.0,104.8 L66.5,103.9 L68.0,102.7 L69.5,101.6 L71.0,100.9 L72.5,100.7 L74.0,100.8 L75.5,101.1 L77.0,101.3 L78.5,101.2 L80.0,100.6 L81.5,99.7 L83.0,98.5 L84.5,97.4 L86.0,96.7 L87.5,96.5 L89.0,96.6 L90.5,96.9 L92.0,97.1 L93.5,97.0 L95.0,96.4 L96.5,95.5 L98.0,94.3 L99.5,93.2 L101.0,92.5 L102.5,92.3 L104.0,92.4 L105.5,92.7 L107.0,92.9 L108.5,92.8 L110.0,92.2 L111.5,91.3 L113.0,90.1 L114.5,89.0 L116.0,88.3 L117.5,88.1 L119.0,88.2 L120.5,88.5 L122.0,88.7 L123.5,88.6 L125.0,88.0 L126.5,87.1 L128.0,85.9 L129.5,84.8 L131.0,84.1 L132.5,83.9 L134.0,84.0 L135.5,84.3 L137.0,84.5 L138.5,84.4 L140.0,83.8 L141.5,82.9 L143.0,81.7 L144.5,80.6 L146.0,79.9 L147.5,79.7 L149.0,79.8 L150.5,80.1 L152.0,80.3 L153.5,80.2 L155.0,79.6 L156.5,78.7 L158.0,77.5 L159.5,76.4 L161.0,75.7 L162.5,75.5 L164.0,75.6 L165.5,75.9 L167.0,76.1 L168.5,76.0 L170.0,75.4 L171.5,74.5 L173.0,73.3 L174.5,72.2 L176.0,71.5 L177.5,71.3 L179.0,71.4 L180.5,71.7 L182.0,71.9 L183.5,71.8 L185.0,71.2 L186.5,70.3 L188.0,69.1 L189.5,68.0"/><path d="M-10.0,139.3 L-8.5,138.4 L-7.0,137.2 L-5.5,136.1 L-4.0,135.4 L-2.5,135.2 L-1.0,135.3 L0.5,135.6 L2.0,135.8 L3.5,135.7 L5.0,135.1 L6.5,134.2 L8.0,133.0 L9.5,131.9 L11.0,131.2 L12.5,131.0 L14.0,131.1 L15.5,131.4 L17.0,131.6 L18.5,131.5 L20.0,130.9 L21.5,130.0 L23.0,128.8 L24.5,127.7 L26.0,127.0 L27.5,126.8 L29.0,126.9 L30.5,127.2 L32.0,127.4 L33.5,127.3 L35.0,126.7 L36.5,125.8 L38.0,124.6 L39.5,123.5 L41.0,122.8 L42.5,122.6 L44.0,122.7 L45.5,123.0 L47.0,123.2 L48.5,123.1 L50.0,122.5 L51.5,121.6 L53.0,120.4 L54.5,119.3 L56.0,118.6 L57.5,118.4 L59.0,118.5 L60.5,118.8 L62.0,119.0 L63.5,118.9 L65.0,118.3 L66.5,117.4 L68.0,116.2 L69.5,115.1 L71.0,114.4 L72.5,114.2 L74.0,114.3 L75.5,114.6 L77.0,114.8 L78.5,114.7 L80.0,114.1 L81.5,113.2 L83.0,112.0 L84.5,110.9 L86.0,110.2 L87.5,110.0 L89.0,110.1 L90.5,110.4 L92.0,110.6 L93.5,110.5 L95.0,109.9 L96.5,109.0 L98.0,107.8 L99.5,106.7 L101.0,106.0 L102.5,105.8 L104.0,105.9 L105.5,106.2 L107.0,106.4 L108.5,106.3 L110.0,105.7 L111.5,104.8 L113.0,103.6 L114.5,102.5 L116.0,101.8 L117.5,101.6 L119.0,101.7 L120.5,102.0 L122.0,102.2 L123.5,102.1 L125.0,101.5 L126.5,100.6 L128.0,99.4 L129.5,98.3 L131.0,97.6 L132.5,97.4 L134.0,97.5 L135.5,97.8 L137.0,98.0 L138.5,97.9 L140.0,97.3 L141.5,96.4 L143.0,95.2 L144.5,94.1 L146.0,93.4 L147.5,93.2 L149.0,93.3 L150.5,93.6 L152.0,93.8 L153.5,93.7 L155.0,93.1 L156.5,92.2 L158.0,91.0 L159.5,89.9 L161.0,89.2 L162.5,89.0 L164.0,89.1 L165.5,89.4 L167.0,89.6 L168.5,89.5 L170.0,88.9 L171.5,88.0 L173.0,86.8 L174.5,85.7 L176.0,85.0 L177.5,84.8 L179.0,84.9 L180.5,85.2 L182.0,85.4 L183.5,85.3 L185.0,84.7 L186.5,83.8 L188.0,82.6 L189.5,81.5"/><path d="M-10.0,152.8 L-8.5,151.9 L-7.0,150.7 L-5.5,149.6 L-4.0,148.9 L-2.5,148.7 L-1.0,148.8 L0.5,149.1 L2.0,149.3 L3.5,149.2 L5.0,148.6 L6.5,147.7 L8.0,146.5 L9.5,145.4 L11.0,144.7 L12.5,144.5 L14.0,144.6 L15.5,144.9 L17.0,145.1 L18.5,145.0 L20.0,144.4 L21.5,143.5 L23.0,142.3 L24.5,141.2 L26.0,140.5 L27.5,140.3 L29.0,140.4 L30.5,140.7 L32.0,140.9 L33.5,140.8 L35.0,140.2 L36.5,139.3 L38.0,138.1 L39.5,137.0 L41.0,136.3 L42.5,136.1 L44.0,136.2 L45.5,136.5 L47.0,136.7 L48.5,136.6 L50.0,136.0 L51.5,135.1 L53.0,133.9 L54.5,132.8 L56.0,132.1 L57.5,131.9 L59.0,132.0 L60.5,132.3 L62.0,132.5 L63.5,132.4 L65.0,131.8 L66.5,130.9 L68.0,129.7 L69.5,128.6 L71.0,127.9 L72.5,127.7 L74.0,127.8 L75.5,128.1 L77.0,128.3 L78.5,128.2 L80.0,127.6 L81.5,126.7 L83.0,125.5 L84.5,124.4 L86.0,123.7 L87.5,123.5 L89.0,123.6 L90.5,123.9 L92.0,124.1 L93.5,124.0 L95.0,123.4 L96.5,122.5 L98.0,121.3 L99.5,120.2 L101.0,119.5 L102.5,119.3 L104.0,119.4 L105.5,119.7 L107.0,119.9 L108.5,119.8 L110.0,119.2 L111.5,118.3 L113.0,117.1 L114.5,116.0 L116.0,115.3 L117.5,115.1 L119.0,115.2 L120.5,115.5 L122.0,115.7 L123.5,115.6 L125.0,115.0 L126.5,114.1 L128.0,112.9 L129.5,111.8 L131.0,111.1 L132.5,110.9 L134.0,111.0 L135.5,111.3 L137.0,111.5 L138.5,111.4 L140.0,110.8 L141.5,109.9 L143.0,108.7 L144.5,107.6 L146.0,106.9 L147.5,106.7 L149.0,106.8 L150.5,107.1 L152.0,107.3 L153.5,107.2 L155.0,106.6 L156.5,105.7 L158.0,104.5 L159.5,103.4 L161.0,102.7 L162.5,102.5 L164.0,102.6 L165.5,102.9 L167.0,103.1 L168.5,103.0 L170.0,102.4 L171.5,101.5 L173.0,100.3 L174.5,99.2 L176.0,98.5 L177.5,98.3 L179.0,98.4 L180.5,98.7 L182.0,98.9 L183.5,98.8 L185.0,98.2 L186.5,97.3 L188.0,96.1 L189.5,95.0"/><path d="M-10.0,166.3 L-8.5,165.4 L-7.0,164.2 L-5.5,163.1 L-4.0,162.4 L-2.5,162.2 L-1.0,162.3 L0.5,162.6 L2.0,162.8 L3.5,162.7 L5.0,162.1 L6.5,161.2 L8.0,160.0 L9.5,158.9 L11.0,158.2 L12.5,158.0 L14.0,158.1 L15.5,158.4 L17.0,158.6 L18.5,158.5 L20.0,157.9 L21.5,157.0 L23.0,155.8 L24.5,154.7 L26.0,154.0 L27.5,153.8 L29.0,153.9 L30.5,154.2 L32.0,154.4 L33.5,154.3 L35.0,153.7 L36.5,152.8 L38.0,151.6 L39.5,150.5 L41.0,149.8 L42.5,149.6 L44.0,149.7 L45.5,150.0 L47.0,150.2 L48.5,150.1 L50.0,149.5 L51.5,148.6 L53.0,147.4 L54.5,146.3 L56.0,145.6 L57.5,145.4 L59.0,145.5 L60.5,145.8 L62.0,146.0 L63.5,145.9 L65.0,145.3 L66.5,144.4 L68.0,143.2 L69.5,142.1 L71.0,141.4 L72.5,141.2 L74.0,141.3 L75.5,141.6 L77.0,141.8 L78.5,141.7 L80.0,141.1 L81.5,140.2 L83.0,139.0 L84.5,137.9 L86.0,137.2 L87.5,137.0 L89.0,137.1 L90.5,137.4 L92.0,137.6 L93.5,137.5 L95.0,136.9 L96.5,136.0 L98.0,134.8 L99.5,133.7 L101.0,133.0 L102.5,132.8 L104.0,132.9 L105.5,133.2 L107.0,133.4 L108.5,133.3 L110.0,132.7 L111.5,131.8 L113.0,130.6 L114.5,129.5 L116.0,128.8 L117.5,128.6 L119.0,128.7 L120.5,129.0 L122.0,129.2 L123.5,129.1 L125.0,128.5 L126.5,127.6 L128.0,126.4 L129.5,125.3 L131.0,124.6 L132.5,124.4 L134.0,124.5 L135.5,124.8 L137.0,125.0 L138.5,124.9 L140.0,124.3 L141.5,123.4 L143.0,122.2 L144.5,121.1 L146.0,120.4 L147.5,120.2 L149.0,120.3 L150.5,120.6 L152.0,120.8 L153.5,120.7 L155.0,120.1 L156.5,119.2 L158.0,118.0 L159.5,116.9 L161.0,116.2 L162.5,116.0 L164.0,116.1 L165.5,116.4 L167.0,116.6 L168.5,116.5 L170.0,115.9 L171.5,115.0 L173.0,113.8 L174.5,112.7 L176.0,112.0 L177.5,111.8 L179.0,111.9 L180.5,112.2 L182.0,112.4 L183.5,112.3 L185.0,111.7 L186.5,110.8 L188.0,109.6 L189.5,108.5"/><path d="M-10.0,179.8 L-8.5,178.9 L-7.0,177.7 L-5.5,176.6 L-4.0,175.9 L-2.5,175.7 L-1.0,175.8 L0.5,176.1 L2.0,176.3 L3.5,176.2 L5.0,175.6 L6.5,174.7 L8.0,173.5 L9.5,172.4 L11.0,171.7 L12.5,171.5 L14.0,171.6 L15.5,171.9 L17.0,172.1 L18.5,172.0 L20.0,171.4 L21.5,170.5 L23.0,169.3 L24.5,168.2 L26.0,167.5 L27.5,167.3 L29.0,167.4 L30.5,167.7 L32.0,167.9 L33.5,167.8 L35.0,167.2 L36.5,166.3 L38.0,165.1 L39.5,164.0 L41.0,163.3 L42.5,163.1 L44.0,163.2 L45.5,163.5 L47.0,163.7 L48.5,163.6 L50.0,163.0 L51.5,162.1 L53.0,160.9 L54.5,159.8 L56.0,159.1 L57.5,158.9 L59.0,159.0 L60.5,159.3 L62.0,159.5 L63.5,159.4 L65.0,158.8 L66.5,157.9 L68.0,156.7 L69.5,155.6 L71.0,154.9 L72.5,154.7 L74.0,154.8 L75.5,155.1 L77.0,155.3 L78.5,155.2 L80.0,154.6 L81.5,153.7 L83.0,152.5 L84.5,151.4 L86.0,150.7 L87.5,150.5 L89.0,150.6 L90.5,150.9 L92.0,151.1 L93.5,151.0 L95.0,150.4 L96.5,149.5 L98.0,148.3 L99.5,147.2 L101.0,146.5 L102.5,146.3 L104.0,146.4 L105.5,146.7 L107.0,146.9 L108.5,146.8 L110.0,146.2 L111.5,145.3 L113.0,144.1 L114.5,143.0 L116.0,142.3 L117.5,142.1 L119.0,142.2 L120.5,142.5 L122.0,142.7 L123.5,142.6 L125.0,142.0 L126.5,141.1 L128.0,139.9 L129.5,138.8 L131.0,138.1 L132.5,137.9 L134.0,138.0 L135.5,138.3 L137.0,138.5 L138.5,138.4 L140.0,137.8 L141.5,136.9 L143.0,135.7 L144.5,134.6 L146.0,133.9 L147.5,133.7 L149.0,133.8 L150.5,134.1 L152.0,134.3 L153.5,134.2 L155.0,133.6 L156.5,132.7 L158.0,131.5 L159.5,130.4 L161.0,129.7 L162.5,129.5 L164.0,129.6 L165.5,129.9 L167.0,130.1 L168.5,130.0 L170.0,129.4 L171.5,128.5 L173.0,127.3 L174.5,126.2 L176.0,125.5 L177.5,125.3 L179.0,125.4 L180.5,125.7 L182.0,125.9 L183.5,125.8 L185.0,125.2 L186.5,124.3 L188.0,123.1 L189.5,122.0"/><path d="M-10.0,193.3 L-8.5,192.4 L-7.0,191.2 L-5.5,190.1 L-4.0,189.4 L-2.5,189.2 L-1.0,189.3 L0.5,189.6 L2.0,189.8 L3.5,189.7 L5.0,189.1 L6.5,188.2 L8.0,187.0 L9.5,185.9 L11.0,185.2 L12.5,185.0 L14.0,185.1 L15.5,185.4 L17.0,185.6 L18.5,185.5 L20.0,184.9 L21.5,184.0 L23.0,182.8 L24.5,181.7 L26.0,181.0 L27.5,180.8 L29.0,180.9 L30.5,181.2 L32.0,181.4 L33.5,181.3 L35.0,180.7 L36.5,179.8 L38.0,178.6 L39.5,177.5 L41.0,176.8 L42.5,176.6 L44.0,176.7 L45.5,177.0 L47.0,177.2 L48.5,177.1 L50.0,176.5 L51.5,175.6 L53.0,174.4 L54.5,173.3 L56.0,172.6 L57.5,172.4 L59.0,172.5 L60.5,172.8 L62.0,173.0 L63.5,172.9 L65.0,172.3 L66.5,171.4 L68.0,170.2 L69.5,169.1 L71.0,168.4 L72.5,168.2 L74.0,168.3 L75.5,168.6 L77.0,168.8 L78.5,168.7 L80.0,168.1 L81.5,167.2 L83.0,166.0 L84.5,164.9 L86.0,164.2 L87.5,164.0 L89.0,164.1 L90.5,164.4 L92.0,164.6 L93.5,164.5 L95.0,163.9 L96.5,163.0 L98.0,161.8 L99.5,160.7 L101.0,160.0 L102.5,159.8 L104.0,159.9 L105.5,160.2 L107.0,160.4 L108.5,160.3 L110.0,159.7 L111.5,158.8 L113.0,157.6 L114.5,156.5 L116.0,155.8 L117.5,155.6 L119.0,155.7 L120.5,156.0 L122.0,156.2 L123.5,156.1 L125.0,155.5 L126.5,154.6 L128.0,153.4 L129.5,152.3 L131.0,151.6 L132.5,151.4 L134.0,151.5 L135.5,151.8 L137.0,152.0 L138.5,151.9 L140.0,151.3 L141.5,150.4 L143.0,149.2 L144.5,148.1 L146.0,147.4 L147.5,147.2 L149.0,147.3 L150.5,147.6 L152.0,147.8 L153.5,147.7 L155.0,147.1 L156.5,146.2 L158.0,145.0 L159.5,143.9 L161.0,143.2 L162.5,143.0 L164.0,143.1 L165.5,143.4 L167.0,143.6 L168.5,143.5 L170.0,142.9 L171.5,142.0 L173.0,140.8 L174.5,139.7 L176.0,139.0 L177.5,138.8 L179.0,138.9 L180.5,139.2 L182.0,139.4 L183.5,139.3 L185.0,138.7 L186.5,137.8 L188.0,136.6 L189.5,135.5"/><path d="M-10.0,206.8 L-8.5,205.9 L-7.0,204.7 L-5.5,203.6 L-4.0,202.9 L-2.5,202.7 L-1.0,202.8 L0.5,203.1 L2.0,203.3 L3.5,203.2 L5.0,202.6 L6.5,201.7 L8.0,200.5 L9.5,199.4 L11.0,198.7 L12.5,198.5 L14.0,198.6 L15.5,198.9 L17.0,199.1 L18.5,199.0 L20.0,198.4 L21.5,197.5 L23.0,196.3 L24.5,195.2 L26.0,194.5 L27.5,194.3 L29.0,194.4 L30.5,194.7 L32.0,194.9 L33.5,194.8 L35.0,194.2 L36.5,193.3 L38.0,192.1 L39.5,191.0 L41.0,190.3 L42.5,190.1 L44.0,190.2 L45.5,190.5 L47.0,190.7 L48.5,190.6 L50.0,190.0 L51.5,189.1 L53.0,187.9 L54.5,186.8 L56.0,186.1 L57.5,185.9 L59.0,186.0 L60.5,186.3 L62.0,186.5 L63.5,186.4 L65.0,185.8 L66.5,184.9 L68.0,183.7 L69.5,182.6 L71.0,181.9 L72.5,181.7 L74.0,181.8 L75.5,182.1 L77.0,182.3 L78.5,182.2 L80.0,181.6 L81.5,180.7 L83.0,179.5 L84.5,178.4 L86.0,177.7 L87.5,177.5 L89.0,177.6 L90.5,177.9 L92.0,178.1 L93.5,178.0 L95.0,177.4 L96.5,176.5 L98.0,175.3 L99.5,174.2 L101.0,173.5 L102.5,173.3 L104.0,173.4 L105.5,173.7 L107.0,173.9 L108.5,173.8 L110.0,173.2 L111.5,172.3 L113.0,171.1 L114.5,170.0 L116.0,169.3 L117.5,169.1 L119.0,169.2 L120.5,169.5 L122.0,169.7 L123.5,169.6 L125.0,169.0 L126.5,168.1 L128.0,166.9 L129.5,165.8 L131.0,165.1 L132.5,164.9 L134.0,165.0 L135.5,165.3 L137.0,165.5 L138.5,165.4 L140.0,164.8 L141.5,163.9 L143.0,162.7 L144.5,161.6 L146.0,160.9 L147.5,160.7 L149.0,160.8 L150.5,161.1 L152.0,161.3 L153.5,161.2 L155.0,160.6 L156.5,159.7 L158.0,158.5 L159.5,157.4 L161.0,156.7 L162.5,156.5 L164.0,156.6 L165.5,156.9 L167.0,157.1 L168.5,157.0 L170.0,156.4 L171.5,155.5 L173.0,154.3 L174.5,153.2 L176.0,152.5 L177.5,152.3 L179.0,152.4 L180.5,152.7 L182.0,152.9 L183.5,152.8 L185.0,152.2 L186.5,151.3 L188.0,150.1 L189.5,149.0"/><path d="M-10.0,220.3 L-8.5,219.4 L-7.0,218.2 L-5.5,217.1 L-4.0,216.4 L-2.5,216.2 L-1.0,216.3 L0.5,216.6 L2.0,216.8 L3.5,216.7 L5.0,216.1 L6.5,215.2 L8.0,214.0 L9.5,212.9 L11.0,212.2 L12.5,212.0 L14.0,212.1 L15.5,212.4 L17.0,212.6 L18.5,212.5 L20.0,211.9 L21.5,211.0 L23.0,209.8 L24.5,208.7 L26.0,208.0 L27.5,207.8 L29.0,207.9 L30.5,208.2 L32.0,208.4 L33.5,208.3 L35.0,207.7 L36.5,206.8 L38.0,205.6 L39.5,204.5 L41.0,203.8 L42.5,203.6 L44.0,203.7 L45.5,204.0 L47.0,204.2 L48.5,204.1 L50.0,203.5 L51.5,202.6 L53.0,201.4 L54.5,200.3 L56.0,199.6 L57.5,199.4 L59.0,199.5 L60.5,199.8 L62.0,200.0 L63.5,199.9 L65.0,199.3 L66.5,198.4 L68.0,197.2 L69.5,196.1 L71.0,195.4 L72.5,195.2 L74.0,195.3 L75.5,195.6 L77.0,195.8 L78.5,195.7 L80.0,195.1 L81.5,194.2 L83.0,193.0 L84.5,191.9 L86.0,191.2 L87.5,191.0 L89.0,191.1 L90.5,191.4 L92.0,191.6 L93.5,191.5 L95.0,190.9 L96.5,190.0 L98.0,188.8 L99.5,187.7 L101.0,187.0 L102.5,186.8 L104.0,186.9 L105.5,187.2 L107.0,187.4 L108.5,187.3 L110.0,186.7 L111.5,185.8 L113.0,184.6 L114.5,183.5 L116.0,182.8 L117.5,182.6 L119.0,182.7 L120.5,183.0 L122.0,183.2 L123.5,183.1 L125.0,182.5 L126.5,181.6 L128.0,180.4 L129.5,179.3 L131.0,178.6 L132.5,178.4 L134.0,178.5 L135.5,178.8 L137.0,179.0 L138.5,178.9 L140.0,178.3 L141.5,177.4 L143.0,176.2 L144.5,175.1 L146.0,174.4 L147.5,174.2 L149.0,174.3 L150.5,174.6 L152.0,174.8 L153.5,174.7 L155.0,174.1 L156.5,173.2 L158.0,172.0 L159.5,170.9 L161.0,170.2 L162.5,170.0 L164.0,170.1 L165.5,170.4 L167.0,170.6 L168.5,170.5 L170.0,169.9 L171.5,169.0 L173.0,167.8 L174.5,166.7 L176.0,166.0 L177.5,165.8 L179.0,165.9 L180.5,166.2 L182.0,166.4 L183.5,166.3 L185.0,165.7 L186.5,164.8 L188.0,163.6 L189.5,162.5"/><path d="M-10.0,233.8 L-8.5,232.9 L-7.0,231.7 L-5.5,230.6 L-4.0,229.9 L-2.5,229.7 L-1.0,229.8 L0.5,230.1 L2.0,230.3 L3.5,230.2 L5.0,229.6 L6.5,228.7 L8.0,227.5 L9.5,226.4 L11.0,225.7 L12.5,225.5 L14.0,225.6 L15.5,225.9 L17.0,226.1 L18.5,226.0 L20.0,225.4 L21.5,224.5 L23.0,223.3 L24.5,222.2 L26.0,221.5 L27.5,221.3 L29.0,221.4 L30.5,221.7 L32.0,221.9 L33.5,221.8 L35.0,221.2 L36.5,220.3 L38.0,219.1 L39.5,218.0 L41.0,217.3 L42.5,217.1 L44.0,217.2 L45.5,217.5 L47.0,217.7 L48.5,217.6 L50.0,217.0 L51.5,216.1 L53.0,214.9 L54.5,213.8 L56.0,213.1 L57.5,212.9 L59.0,213.0 L60.5,213.3 L62.0,213.5 L63.5,213.4 L65.0,212.8 L66.5,211.9 L68.0,210.7 L69.5,209.6 L71.0,208.9 L72.5,208.7 L74.0,208.8 L75.5,209.1 L77.0,209.3 L78.5,209.2 L80.0,208.6 L81.5,207.7 L83.0,206.5 L84.5,205.4 L86.0,204.7 L87.5,204.5 L89.0,204.6 L90.5,204.9 L92.0,205.1 L93.5,205.0 L95.0,204.4 L96.5,203.5 L98.0,202.3 L99.5,201.2 L101.0,200.5 L102.5,200.3 L104.0,200.4 L105.5,200.7 L107.0,200.9 L108.5,200.8 L110.0,200.2 L111.5,199.3 L113.0,198.1 L114.5,197.0 L116.0,196.3 L117.5,196.1 L119.0,196.2 L120.5,196.5 L122.0,196.7 L123.5,196.6 L125.0,196.0 L126.5,195.1 L128.0,193.9 L129.5,192.8 L131.0,192.1 L132.5,191.9 L134.0,192.0 L135.5,192.3 L137.0,192.5 L138.5,192.4 L140.0,191.8 L141.5,190.9 L143.0,189.7 L144.5,188.6 L146.0,187.9 L147.5,187.7 L149.0,187.8 L150.5,188.1 L152.0,188.3 L153.5,188.2 L155.0,187.6 L156.5,186.7 L158.0,185.5 L159.5,184.4 L161.0,183.7 L162.5,183.5 L164.0,183.6 L165.5,183.9 L167.0,184.1 L168.5,184.0 L170.0,183.4 L171.5,182.5 L173.0,181.3 L174.5,180.2 L176.0,179.5 L177.5,179.3 L179.0,179.4 L180.5,179.7 L182.0,179.9 L183.5,179.8 L185.0,179.2 L186.5,178.3 L188.0,177.1 L189.5,176.0"/><path d="M-10.0,247.3 L-8.5,246.4 L-7.0,245.2 L-5.5,244.1 L-4.0,243.4 L-2.5,243.2 L-1.0,243.3 L0.5,243.6 L2.0,243.8 L3.5,243.7 L5.0,243.1 L6.5,242.2 L8.0,241.0 L9.5,239.9 L11.0,239.2 L12.5,239.0 L14.0,239.1 L15.5,239.4 L17.0,239.6 L18.5,239.5 L20.0,238.9 L21.5,238.0 L23.0,236.8 L24.5,235.7 L26.0,235.0 L27.5,234.8 L29.0,234.9 L30.5,235.2 L32.0,235.4 L33.5,235.3 L35.0,234.7 L36.5,233.8 L38.0,232.6 L39.5,231.5 L41.0,230.8 L42.5,230.6 L44.0,230.7 L45.5,231.0 L47.0,231.2 L48.5,231.1 L50.0,230.5 L51.5,229.6 L53.0,228.4 L54.5,227.3 L56.0,226.6 L57.5,226.4 L59.0,226.5 L60.5,226.8 L62.0,227.0 L63.5,226.9 L65.0,226.3 L66.5,225.4 L68.0,224.2 L69.5,223.1 L71.0,222.4 L72.5,222.2 L74.0,222.3 L75.5,222.6 L77.0,222.8 L78.5,222.7 L80.0,222.1 L81.5,221.2 L83.0,220.0 L84.5,218.9 L86.0,218.2 L87.5,218.0 L89.0,218.1 L90.5,218.4 L92.0,218.6 L93.5,218.5 L95.0,217.9 L96.5,217.0 L98.0,215.8 L99.5,214.7 L101.0,214.0 L102.5,213.8 L104.0,213.9 L105.5,214.2 L107.0,214.4 L108.5,214.3 L110.0,213.7 L111.5,212.8 L113.0,211.6 L114.5,210.5 L116.0,209.8 L117.5,209.6 L119.0,209.7 L120.5,210.0 L122.0,210.2 L123.5,210.1 L125.0,209.5 L126.5,208.6 L128.0,207.4 L129.5,206.3 L131.0,205.6 L132.5,205.4 L134.0,205.5 L135.5,205.8 L137.0,206.0 L138.5,205.9 L140.0,205.3 L141.5,204.4 L143.0,203.2 L144.5,202.1 L146.0,201.4 L147.5,201.2 L149.0,201.3 L150.5,201.6 L152.0,201.8 L153.5,201.7 L155.0,201.1 L156.5,200.2 L158.0,199.0 L159.5,197.9 L161.0,197.2 L162.5,197.0 L164.0,197.1 L165.5,197.4 L167.0,197.6 L168.5,197.5 L170.0,196.9 L171.5,196.0 L173.0,194.8 L174.5,193.7 L176.0,193.0 L177.5,192.8 L179.0,192.9 L180.5,193.2 L182.0,193.4 L183.5,193.3 L185.0,192.7 L186.5,191.8 L188.0,190.6 L189.5,189.5"/></g></g>
<g fill="none" stroke="#3f3f3f" style="stroke-width:var(--hw,1.6)" stroke-linecap="round">
<path d="M78,24 C88,20 100,22 108,30 C112,36 116,40 114,44"/>
<path d="M88,26 L94,22 L96,27 L101,23 L103,29"/>
<path d="M108,44 C112,45 115,44 117,41"/>
<path d="M124,22 C130,26 134,30 134,34"/>
<path d="M140,30 C150,31 160,33 168,35"/>
<path d="M142,36 C152,37 160,40 164,42"/>
<path d="M116,56 C119,50 122,46 126,42"/>
<path d="M122,58 C132,62 142,66 150,70"/>
</g>
<polygon points="124.6,43.5 132.3,38.6 152.6,45.9 162.2,48.3 156.4,56.0 154.5,59.0 147.7,61.8 141.0,58.0 124.6,54.0 122.6,48.3" fill="#1f2937" stroke="#3f3f3f" stroke-width="1.2"/>
<polygon points="132.3,38.6 139.0,38.1 150.6,44.4 152.6,47.3 142.0,44.4 134.2,41.5" fill="#e0188c"/>
<g fill="#ffffff">
<polygon points="128,42 133,41 131,47"/><polygon points="137,43 142,45 139,50"/><polygon points="144,46 148,47 146,51"/><polygon points="150,48 156,49 153,54"/><polygon points="158,49 162,48 159,55"/>
<polygon points="127,52 131,53 130,49"/><polygon points="133,55 138,56 136,51"/><polygon points="140,58 145,58 143,54"/><polygon points="147,60 151,59 150,55"/>
</g>
</symbol></defs></svg>
<svg class="abs" style="left:240px;top:1065px" width="180" height="135"><use href="#wolf"/></svg>
<svg class="abs" style="left:60.4px;top:14px;--sw:3.2;--ow:2.6;--hw:2.4" width="61.4" height="46" viewBox="0 0 180 135"><use href="#wolf"/></svg>

<svg class="abs" style="left:1598px;top:1315px" width="25" height="25" viewBox="0 0 24 24"><path fill="#6b7280" d="M24 12.073c0-6.627-5.373-12-12-12s-12 5.373-12 12c0 5.99 4.388 10.954 10.125 11.854v-8.385H7.078v-3.47h3.047V9.43c0-3.007 1.792-4.669 4.533-4.669 1.312 0 2.686.235 2.686.235v2.953H15.83c-1.491 0-1.956.925-1.956 1.874v2.25h3.328l-.532 3.47h-2.796v8.385C19.612 23.027 24 18.062 24 12.073z"/></svg>
<svg class="abs" style="left:1658px;top:1315px" width="25" height="25" viewBox="0 0 26 26"><rect x="1" y="1" width="24" height="24" rx="6" fill="none" stroke="#6b7280" stroke-width="2"/><circle cx="13" cy="13" r="5.3" fill="none" stroke="#6b7280" stroke-width="2"/><circle cx="19.7" cy="6.3" r="1.3" fill="#6b7280"/></svg>
<svg class="abs" style="left:1718px;top:1317px" width="25" height="23" viewBox="0 0 24 22"><path fill="#6b7280" d="M23.953 3.57a10 10 0 01-2.825.775 4.958 4.958 0 002.163-2.723c-.951.555-2.005.959-3.127 1.184a4.92 4.92 0 00-8.384 4.482C7.69 7.095 4.067 5.13 1.64 2.162a4.822 4.822 0 00-.666 2.475c0 1.71.87 3.213 2.188 4.096a4.904 4.904 0 01-2.228-.616v.06a4.923 4.923 0 003.946 4.827 4.996 4.996 0 01-2.212.085 4.936 4.936 0 004.604 3.417 9.867 9.867 0 01-6.102 2.105c-.39 0-.779-.023-1.17-.067a13.995 13.995 0 007.557 2.209c9.053 0 13.998-7.496 13.998-13.985 0-.21 0-.42-.015-.63A9.935 9.935 0 0024 3.59z"/></svg>
<svg class="abs" style="left:1778px;top:1315px" width="25" height="25" viewBox="0 0 26 26"><g fill="none" stroke="#6b7280" stroke-width="2"><circle cx="13" cy="13" r="12"/><path d="M8 2.2 C13 8 17 16 19 24.3"/><path d="M1.3 11.5 C8 12.5 16 10 21.5 4.5"/><path d="M4.8 22 C9 16 17 13.5 25 15"/></g></svg>
<div class="t" style="left:135.52px;top:26.10px;font:normal 25.872px 'Liberation Sans',sans-serif;color:#06b6d4;transform:scaleX(0.8826);-webkit-text-stroke:0.70px #06b6d4">STARK UNIVERSITY</div>
<div class="t" style="left:633.00px;top:27.88px;font:normal 19.041px 'Liberation Sans',sans-serif;color:#9ca3af;transform:scaleX(0.8294)">Search...</div>
<div class="t" style="left:1146.55px;top:25.64px;font:normal 19.331px 'Liberation Sans',sans-serif;color:#0891b2;transform:scaleX(0.9496);-webkit-text-stroke:0.70px #0891b2">Home</div>
<div class="t" style="left:1276.50px;top:25.64px;font:normal 19.331px 'Liberation Sans',sans-serif;color:#0891b2;transform:scaleX(0.8653);-webkit-text-stroke:0.70px #0891b2">Courses</div>
<div class="t" style="left:1419.90px;top:25.64px;font:normal 19.331px 'Liberation Sans',sans-serif;color:#0891b2;transform:scaleX(0.9582);-webkit-text-stroke:0.70px #0891b2">About</div>
<div class="t" style="left:611.68px;top:141.15px;font:normal 32.061px 'Liberation Serif',serif;color:#06b6d4;transform:scaleX(1.0178);-webkit-text-stroke:0.35px #06b6d4">IT</div>
<div class="t" style="left:641.90px;top:149.18px;font:normal 23.669px 'Liberation Serif',serif;color:#06b6d4;transform:scaleX(1.4950);-webkit-text-stroke:0.35px #06b6d4">2040</div>
<div class="t" style="left:739.60px;top:141.15px;font:normal 32.061px 'Liberation Serif',serif;color:#06b6d4;transform:scaleX(0.9499);-webkit-text-stroke:0.35px #06b6d4">DATABASE MANAGEMENT SYSTEMS</div>
<div class="t" style="left:230.40px;top:206.21px;font:normal 23.256px 'Liberation Sans',sans-serif;color:#9ca3af;transform:scaleX(0.9797)">3/18/2024</div>
<div class="t" style="left:1446.40px;top:203.70px;font:normal 24.122px 'Liberation Serif',serif;color:#9ca3af;transform:scaleX(0.9761);-webkit-text-stroke:0.35px #9ca3af">CREDIT POINTS :</div>
<div class="t" style="left:1637.90px;top:210.16px;font:normal 17.604px 'Liberation Serif',serif;color:#9ca3af;transform:scaleX(1.3875);-webkit-text-stroke:0.35px #9ca3af">2</div>
<div class="t" style="left:229.52px;top:271.01px;font:normal 22.674px 'Liberation Sans',sans-serif;color:#6b7280;transform:scaleX(0.9767)">Course Description</div>
<div class="t" style="left:230.50px;top:313.61px;font:normal 18.895px 'Liberation Sans',sans-serif;color:#ffffff;transform:scaleX(0.9292)">This is Information Technology Module</div>
<div class="t" style="left:229.90px;top:371.11px;font:normal 22.674px 'Liberation Sans',sans-serif;color:#6b7280;transform:scaleX(0.9399)">Assign Faculty</div>
<div class="t" style="left:230.20px;top:413.97px;font:normal 18.459px 'Liberation Sans',sans-serif;color:#ffffff;transform:scaleX(0.9502)">65f3ddbdff8160c3dd2f09ee</div>
<div class="t" style="left:815.30px;top:474.04px;font:normal 27.176px 'Liberation Serif',serif;color:#06b6d4;transform:scaleX(0.9457);-webkit-text-stroke:0.35px #06b6d4">AVAILABLE COURSE</div>
<div class="t" style="left:220.82px;top:1206.10px;font:normal 25.872px 'Liberation Sans',sans-serif;color:#ffffff;transform:scaleX(0.8846);-webkit-text-stroke:0.70px #ffffff">STARK UNIVERSITY</div>
<div class="t" style="left:1195.40px;top:1069.05px;font:normal 18.605px 'Liberation Sans',sans-serif;color:#ffffff;transform:scaleX(0.8016);-webkit-text-stroke:0.70px #ffffff">REFERENCE</div>
<div class="t" style="left:1426.20px;top:1069.05px;font:normal 18.605px 'Liberation Sans',sans-serif;color:#ffffff;transform:scaleX(0.8018);-webkit-text-stroke:0.70px #ffffff">SERVICES</div>
<div class="t" style="left:1656.75px;top:1069.05px;font:normal 18.605px 'Liberation Sans',sans-serif;color:#ffffff;transform:scaleX(0.8480);-webkit-text-stroke:0.70px #ffffff">LEGAL</div>
<div class="t" style="left:1195.27px;top:1124.01px;font:normal 18.895px 'Liberation Sans',sans-serif;color:#ffffff;transform:scaleX(0.9296)">Faculty of Computing</div>
<div class="t" style="left:1195.29px;top:1169.01px;font:normal 18.895px 'Liberation Sans',sans-serif;color:#ffffff;transform:scaleX(0.9114)">Faculty of Engineering</div>
<div class="t" style="left:1195.32px;top:1214.01px;font:normal 18.895px 'Liberation Sans',sans-serif;color:#ffffff;transform:scaleX(0.8834)">Faculty of Business</div>
<div class="t" style="left:1426.31px;top:1124.01px;font:normal 18.895px 'Liberation Sans',sans-serif;color:#ffffff;transform:scaleX(0.8946)">Help Desk</div>
<div class="t" style="left:1426.60px;top:1169.01px;font:normal 18.895px 'Liberation Sans',sans-serif;color:#ffffff;transform:scaleX(0.8919)">Student Service</div>
<div class="t" style="left:1426.60px;top:1214.01px;font:normal 18.895px 'Liberation Sans',sans-serif;color:#ffffff;transform:scaleX(0.8798)">Vehicle Service</div>
<div class="t" style="left:1657.43px;top:1124.01px;font:normal 18.895px 'Liberation Sans',sans-serif;color:#ffffff;transform:scaleX(0.8690)">Privacy Policy</div>
<div class="t" style="left:1657.60px;top:1169.01px;font:normal 18.895px 'Liberation Sans',sans-serif;color:#ffffff;transform:scaleX(0.9264)">Terms &amp; Conditions</div>
<div class="t" style="left:222.00px;top:1335.24px;font:normal 18.023px 'Liberation Sans',sans-serif;color:#9ca3af;transform:scaleX(0.9482)">© 2024 Copyright Avishka Rathnakumara. All Rights Reserved.</div>
<div class="t" style="left:235.10px;top:569.83px;font:normal 22.529px 'Liberation Sans',sans-serif;color:#6b7280;transform:scaleX(1.0004)">IT2040</div>
<div class="t" style="left:330.00px;top:569.83px;font:normal 22.529px 'Liberation Sans',sans-serif;color:#e5e7eb;transform:scaleX(0.9951);-webkit-text-stroke:0.70px #e5e7eb">Database Management Systems</div>
<div class="t" style="left:830.27px;top:569.83px;font:normal 22.529px 'Liberation Sans',sans-serif;color:#6b7280;transform:scaleX(0.9262)">SE3040</div>
<div class="t" style="left:930.10px;top:569.83px;font:normal 22.529px 'Liberation Sans',sans-serif;color:#e5e7eb;transform:scaleX(1.0246);-webkit-text-stroke:0.70px #e5e7eb">Application Frameworks</div>
<div class="t" style="left:236.17px;top:639.83px;font:normal 22.529px 'Liberation Sans',sans-serif;color:#6b7280;transform:scaleX(0.9275)">SE3030</div>
<div class="t" style="left:332.97px;top:639.83px;font:normal 22.529px 'Liberation Sans',sans-serif;color:#e5e7eb;transform:scaleX(1.0341);-webkit-text-stroke:0.70px #e5e7eb">Software Architecture</div>
<div class="t" style="left:829.19px;top:639.83px;font:normal 22.529px 'Liberation Sans',sans-serif;color:#6b7280;transform:scaleX(1.0033)">IT2020</div>
<div class="t" style="left:922.98px;top:639.83px;font:normal 22.529px 'Liberation Sans',sans-serif;color:#e5e7eb;transform:scaleX(1.0198);-webkit-text-stroke:0.70px #e5e7eb">Software Engineering</div>
<div class="t" style="left:235.12px;top:709.83px;font:normal 22.529px 'Liberation Sans',sans-serif;color:#6b7280;transform:scaleX(0.9900)">IT2030</div>
<div class="t" style="left:327.96px;top:709.83px;font:normal 22.529px 'Liberation Sans',sans-serif;color:#e5e7eb;transform:scaleX(1.0418);-webkit-text-stroke:0.70px #e5e7eb">Object Oriented Programming</div>
<div class="t" style="left:829.19px;top:709.83px;font:normal 22.529px 'Liberation Sans',sans-serif;color:#6b7280;transform:scaleX(1.0033)">IT2050</div>
<div class="t" style="left:922.96px;top:709.83px;font:normal 22.529px 'Liberation Sans',sans-serif;color:#e5e7eb;transform:scaleX(1.0420);-webkit-text-stroke:0.70px #e5e7eb">Computer Networks</div>
<div class="t" style="left:235.12px;top:779.83px;font:normal 22.529px 'Liberation Sans',sans-serif;color:#6b7280;transform:scaleX(0.9900)">IT2060</div>
<div class="t" style="left:328.00px;top:779.83px;font:normal 22.529px 'Liberation Sans',sans-serif;color:#e5e7eb;transform:scaleX(1.0037);-webkit-text-stroke:0.70px #e5e7eb">Operating Systems and System</div>
<div class="t" style="left:830.32px;top:779.83px;font:normal 22.529px 'Liberation Sans',sans-serif;color:#6b7280;transform:scaleX(0.8804)">SE3010</div>
<div class="t" style="left:925.19px;top:779.83px;font:normal 22.529px 'Liberation Sans',sans-serif;color:#e5e7eb;transform:scaleX(1.0059);-webkit-text-stroke:0.70px #e5e7eb">Software Engineering Process &amp; Quality</div>
</body></html>
